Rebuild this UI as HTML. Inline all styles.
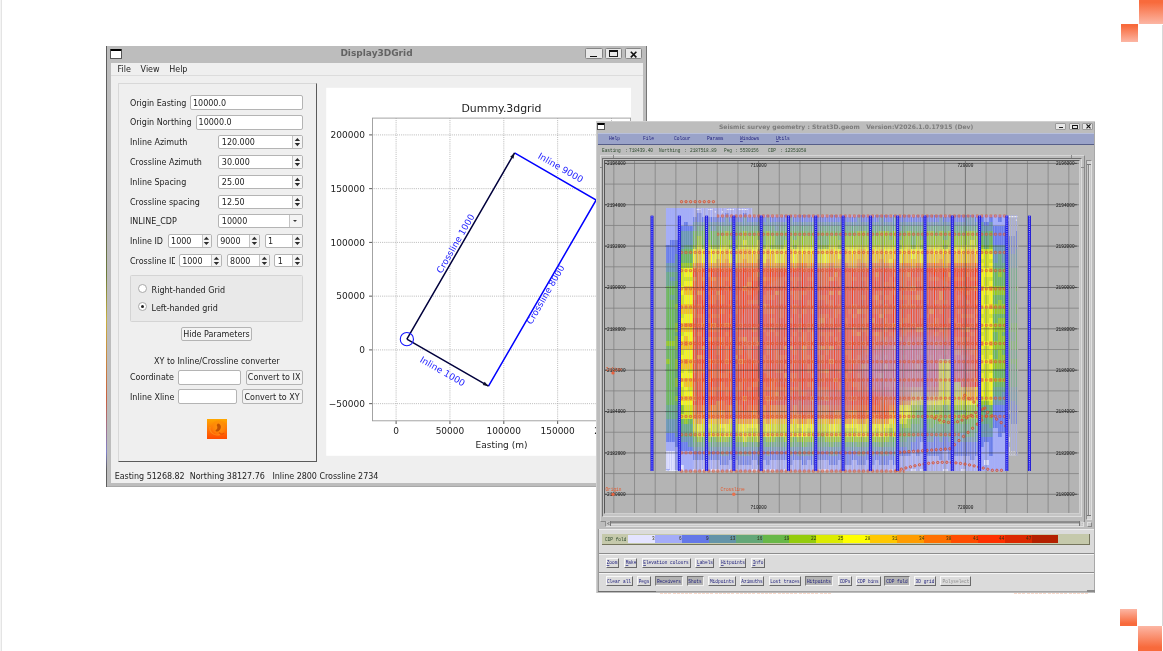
<!DOCTYPE html>
<html lang="en">
<head>
<meta charset="utf-8">
<title>Display3DGrid</title>
<style>
html,body{margin:0;padding:0;background:#fff;}
body{opacity:.999;width:1163px;height:651px;position:relative;overflow:hidden;font-family:"DejaVu Sans","Liberation Sans",sans-serif;}
.abs{position:absolute;}
.lab{position:absolute;font-size:8px;color:#222;white-space:nowrap;line-height:10px;}
.inp{position:absolute;background:#fff;border:1px solid #b4b4b4;border-radius:2px;box-sizing:border-box;font-size:8px;color:#222;line-height:12.5px;padding-left:2.5px;padding-top:.9px;white-space:nowrap;overflow:hidden;}
.spin{position:absolute;right:0;top:0;width:9.3px;height:100%;border-left:1px solid #c4c4c4;box-sizing:border-box;background:#f4f4f4;}
.combo{position:absolute;right:0;top:0;width:12.6px;height:100%;border-left:1px solid #c4c4c4;box-sizing:border-box;background:#f4f4f4;}
.combo:after{content:"";position:absolute;left:3.4px;top:5.2px;border-left:2.3px solid transparent;border-right:2.3px solid transparent;border-top:2.6px solid #333;}
.btn{position:absolute;background:#f3f3f3;border:1px solid #b4b4b4;border-radius:2px;box-sizing:border-box;font-size:8px;color:#222;line-height:12.5px;text-align:center;white-space:nowrap;}
.mn{position:absolute;font-family:"Liberation Mono","DejaVu Sans Mono",monospace;white-space:pre;line-height:7px;}
.ul::first-letter{text-decoration:underline;text-decoration-thickness:.4px;text-underline-offset:.5px;text-decoration-color:rgba(32,32,124,.7)}
</style>
</head>
<body>

<div class="abs" style="left:1px;top:0;width:1px;height:651px;background:#e4e4e4"></div>
<div class="abs" style="left:0px;top:0;width:1px;height:651px;background:#f4f4f4"></div>
<div class="abs" style="left:1162px;top:25px;width:1px;height:601px;background:#d8d8d8"></div>
<div class="abs" style="left:1138.50px;top:0.00px;width:24.50px;height:24.00px;background:linear-gradient(#f86a3c 10%,#fcb6a4 100%)"></div>
<div class="abs" style="left:1121.00px;top:24.00px;width:17.30px;height:18.00px;background:linear-gradient(#f86a3c 10%,#fcb6a4 100%)"></div>
<div class="abs" style="left:1120.00px;top:608.60px;width:17.30px;height:17.60px;background:linear-gradient(#fcb6a4 0%,#f86a3c 85%)"></div>
<div class="abs" style="left:1137.60px;top:626.40px;width:24.60px;height:24.60px;background:linear-gradient(#fcb6a4 0%,#f86a3c 85%)"></div>
<div class="abs" style="left:106.00px;top:46.00px;width:541.00px;height:441.00px;background:#bdbdbd"></div>
<div class="abs" style="left:106.00px;top:46.00px;width:1.00px;height:441.00px;background:linear-gradient(#5e5e5e 0%,#5e5e5e 38%,#6c7a3a 52%,#c8b040 62%,#c86040 80%,#8080c8 92%,#5e5e5e 96%)"></div>
<div class="abs" style="left:646.00px;top:46.00px;width:1.00px;height:441.00px;background:#767676"></div>
<div class="abs" style="left:107.00px;top:486.00px;width:540.00px;height:1.00px;background:#a8a8a8"></div>
<div class="abs" style="left:111.00px;top:62.50px;width:532.00px;height:420.00px;background:#efefef"></div>
<div class="abs" style="left:106px;top:46px;width:541px;height:17px;text-align:center;font-weight:bold;font-size:9.0px;line-height:15.2px;color:#636363;">Display3DGrid</div>
<div class="abs" style="left:110.20px;top:49.20px;width:11.60px;height:9.80px;background:#fff;border:1px solid #555;border-top:2.8px solid #000;box-sizing:border-box;border-radius:1px"></div>
<div class="abs" style="left:584.90px;top:48.40px;width:17.70px;height:11.10px;background:#e9e9e9;border:1px solid #858585;box-sizing:border-box;border-radius:1.5px"><div class="abs" style="left:4.5px;bottom:1.3px;width:7px;height:1.7px;background:#111"></div></div>
<div class="abs" style="left:604.80px;top:48.40px;width:17.60px;height:11.10px;background:#e9e9e9;border:1px solid #858585;box-sizing:border-box;border-radius:1.5px"><div class="abs" style="left:3.4px;top:1px;width:9px;height:6.8px;border:1.1px solid #222;border-top:2px solid #111;box-sizing:border-box"></div></div>
<div class="abs" style="left:624.50px;top:48.40px;width:17.90px;height:11.10px;background:#e9e9e9;border:1px solid #858585;box-sizing:border-box;border-radius:1.5px"><svg class="abs" style="left:4.6px;top:1.3px" width="7.2" height="7.2" viewBox="0 0 7.2 7.2"><path d="M.8 .8L6.4 6.4M6.4 .8L.8 6.4" stroke="#111" stroke-width="1.6" fill="none"/></svg></div>
<div class="abs" style="left:111.00px;top:75.00px;width:532.00px;height:1.00px;background:#dcdcdc"></div>
<div class="lab" style="left:117.50px;top:64.70px;">File</div>
<div class="lab" style="left:140.60px;top:64.70px;">View</div>
<div class="lab" style="left:169.20px;top:64.70px;">Help</div>
<div class="abs" style="left:117.50px;top:82.80px;width:199.00px;height:379.00px;border:1px solid #d8d8d8;border-right:1.3px solid #5a5a5a;border-bottom:1.3px solid #5a5a5a;box-sizing:border-box;background:#efefef"></div>
<div class="lab" style="left:130.00px;top:98.80px;">Origin Easting</div>
<div class="inp" style="left:190.30px;top:95.40px;width:112.30px;height:14.70px;"></div>
<div class="lab" style="left:193.00px;top:98.80px;">10000.0</div>
<div class="lab" style="left:130.00px;top:118.40px;">Origin Northing</div>
<div class="inp" style="left:195.90px;top:114.90px;width:106.70px;height:14.70px;"></div>
<div class="lab" style="left:198.60px;top:118.30px;">10000.0</div>
<div class="lab" style="left:130.00px;top:138.10px;">Inline Azimuth</div>
<div class="inp" style="left:218.30px;top:134.60px;width:84.30px;height:14.00px;"><span class="spin"><svg width="9" height="12.0" viewBox="0 0 9 12.0" style="position:absolute;left:-.4px;top:0"><path d="M1.7 5.00L4.4 1.90L7.1 5.00ZM1.7 7.10L4.4 10.20L7.1 7.10Z" fill="#2c2c2c"/></svg></span></div>
<div class="lab" style="left:221.80px;top:137.65px;">120.000</div>
<div class="lab" style="left:130.00px;top:157.90px;">Crossline Azimuth</div>
<div class="inp" style="left:218.30px;top:154.60px;width:84.30px;height:14.00px;"><span class="spin"><svg width="9" height="12.0" viewBox="0 0 9 12.0" style="position:absolute;left:-.4px;top:0"><path d="M1.7 5.00L4.4 1.90L7.1 5.00ZM1.7 7.10L4.4 10.20L7.1 7.10Z" fill="#2c2c2c"/></svg></span></div>
<div class="lab" style="left:221.80px;top:157.65px;">30.000</div>
<div class="lab" style="left:130.00px;top:177.80px;">Inline Spacing</div>
<div class="inp" style="left:218.30px;top:174.70px;width:84.30px;height:13.90px;"><span class="spin"><svg width="9" height="11.9" viewBox="0 0 9 11.9" style="position:absolute;left:-.4px;top:0"><path d="M1.7 4.95L4.4 1.85L7.1 4.95ZM1.7 7.05L4.4 10.15L7.1 7.05Z" fill="#2c2c2c"/></svg></span></div>
<div class="lab" style="left:221.80px;top:177.70px;">25.00</div>
<div class="lab" style="left:130.00px;top:197.50px;">Crossline spacing</div>
<div class="inp" style="left:218.30px;top:194.60px;width:84.30px;height:14.00px;"><span class="spin"><svg width="9" height="12.0" viewBox="0 0 9 12.0" style="position:absolute;left:-.4px;top:0"><path d="M1.7 5.00L4.4 1.90L7.1 5.00ZM1.7 7.10L4.4 10.20L7.1 7.10Z" fill="#2c2c2c"/></svg></span></div>
<div class="lab" style="left:221.80px;top:197.65px;">12.50</div>
<div class="lab" style="left:130.00px;top:217.20px;">INLINE_CDP</div>
<div class="inp" style="left:218.30px;top:213.70px;width:84.30px;height:14.70px;"><span class="combo"></span></div>
<div class="lab" style="left:221.80px;top:217.10px;">10000</div>
<div class="lab" style="left:130.00px;top:237.00px;">Inline ID</div>
<div class="inp" style="left:167.60px;top:234.00px;width:44.40px;height:13.60px;"><span class="spin"><svg width="9" height="11.6" viewBox="0 0 9 11.6" style="position:absolute;left:-.4px;top:0"><path d="M1.7 4.80L4.4 1.70L7.1 4.80ZM1.7 6.90L4.4 10.00L7.1 6.90Z" fill="#2c2c2c"/></svg></span></div>
<div class="lab" style="left:171.10px;top:236.85px;">1000</div>
<div class="inp" style="left:216.70px;top:234.00px;width:42.90px;height:13.60px;"><span class="spin"><svg width="9" height="11.6" viewBox="0 0 9 11.6" style="position:absolute;left:-.4px;top:0"><path d="M1.7 4.80L4.4 1.70L7.1 4.80ZM1.7 6.90L4.4 10.00L7.1 6.90Z" fill="#2c2c2c"/></svg></span></div>
<div class="lab" style="left:220.20px;top:236.85px;">9000</div>
<div class="inp" style="left:264.50px;top:234.00px;width:38.10px;height:13.60px;"><span class="spin"><svg width="9" height="11.6" viewBox="0 0 9 11.6" style="position:absolute;left:-.4px;top:0"><path d="M1.7 4.80L4.4 1.70L7.1 4.80ZM1.7 6.90L4.4 10.00L7.1 6.90Z" fill="#2c2c2c"/></svg></span></div>
<div class="lab" style="left:268.00px;top:236.85px;">1</div>
<div class="lab" style="left:130px;top:256.90px;width:44.5px;overflow:hidden">Crossline ID</div>
<div class="inp" style="left:178.70px;top:253.90px;width:43.10px;height:13.60px;"><span class="spin"><svg width="9" height="11.6" viewBox="0 0 9 11.6" style="position:absolute;left:-.4px;top:0"><path d="M1.7 4.80L4.4 1.70L7.1 4.80ZM1.7 6.90L4.4 10.00L7.1 6.90Z" fill="#2c2c2c"/></svg></span></div>
<div class="lab" style="left:182.20px;top:256.75px;">1000</div>
<div class="inp" style="left:226.60px;top:253.90px;width:43.00px;height:13.60px;"><span class="spin"><svg width="9" height="11.6" viewBox="0 0 9 11.6" style="position:absolute;left:-.4px;top:0"><path d="M1.7 4.80L4.4 1.70L7.1 4.80ZM1.7 6.90L4.4 10.00L7.1 6.90Z" fill="#2c2c2c"/></svg></span></div>
<div class="lab" style="left:230.10px;top:256.75px;">8000</div>
<div class="inp" style="left:274.30px;top:253.90px;width:28.30px;height:13.60px;"><span class="spin"><svg width="9" height="11.6" viewBox="0 0 9 11.6" style="position:absolute;left:-.4px;top:0"><path d="M1.7 4.80L4.4 1.70L7.1 4.80ZM1.7 6.90L4.4 10.00L7.1 6.90Z" fill="#2c2c2c"/></svg></span></div>
<div class="lab" style="left:277.80px;top:256.75px;">1</div>
<div class="abs" style="left:130.40px;top:275.40px;width:172.20px;height:46.60px;background:#e9e9e9;border:1px solid #d4d4d4;box-sizing:border-box;border-radius:1.5px"></div>
<div class="abs" style="left:138.00px;top:284.40px;width:9.00px;height:9.00px;border-radius:50%;background:#fff;border:1px solid #a8a8a8;box-sizing:border-box"></div>
<div class="lab" style="left:151.60px;top:285.50px;">Right-handed Grid</div>
<div class="abs" style="left:138.00px;top:302.40px;width:9.00px;height:9.00px;border-radius:50%;background:#fff;border:1px solid #a8a8a8;box-sizing:border-box"><div class="abs" style="left:2px;top:2px;width:3px;height:3px;border-radius:50%;background:#222"></div></div>
<div class="lab" style="left:151.60px;top:303.60px;">Left-handed grid</div>
<div class="btn" style="left:180.60px;top:326.80px;width:71.80px;height:14.50px;"></div>
<div class="lab" style="left:180.60px;width:71.80px;text-align:center;top:329.90px;">Hide Parameters</div>
<div class="lab" style="left:154.00px;top:356.80px;">XY to Inline/Crossline converter</div>
<div class="lab" style="left:130.00px;top:373.20px;">Coordinate</div>
<div class="inp" style="left:178.30px;top:369.70px;width:62.30px;height:14.90px;"></div>
<div class="btn" style="left:245.60px;top:369.70px;width:57.00px;height:14.90px;"></div>
<div class="lab" style="left:245.60px;width:57.00px;text-align:center;top:373.20px;">Convert to IX</div>
<div class="lab" style="left:130.00px;top:392.60px;">Inline Xline</div>
<div class="inp" style="left:178.30px;top:389.40px;width:59.10px;height:14.30px;"></div>
<div class="btn" style="left:241.60px;top:389.40px;width:61.00px;height:14.30px;"></div>
<div class="lab" style="left:241.60px;width:61.00px;text-align:center;top:392.60px;">Convert to XY</div>
<svg class="abs" style="left:206.6px;top:418.9px" width="20" height="20" viewBox="0 0 20 20"><defs><linearGradient id="og" x1="0" y1="0" x2="0" y2="1"><stop offset="0" stop-color="#ffa800"/><stop offset=".45" stop-color="#ff7c08"/><stop offset="1" stop-color="#ff4a00"/></linearGradient><radialGradient id="og2" cx=".6" cy=".45" r=".42"><stop offset="0" stop-color="#ff9a10" stop-opacity=".9"/><stop offset=".7" stop-color="#ff8a08" stop-opacity=".5"/><stop offset="1" stop-color="#ff7000" stop-opacity="0"/></radialGradient></defs><rect width="20" height="20" fill="url(#og)"/><rect width="20" height="20" fill="url(#og2)"/><path d="M11.2 4.6C14.6 5.2 15 10.4 11.4 12.2C10 12.9 8.4 12.4 8.6 11.2C10.6 10.6 10.8 8.2 9.8 6.6C10 5.4 10.4 4.8 11.2 4.6Z" fill="#b84800" fill-opacity=".85"/><path d="M3 8C2 13 7 17.5 13 15.5" stroke="#ff9c20" stroke-width="1.1" fill="none" stroke-opacity=".6"/><path d="M12 13.5C13.5 15.5 16 15.6 17 14" stroke="#d84000" stroke-width="1.3" fill="none" stroke-opacity=".55"/></svg>
<div class="lab" style="left:114.70px;top:471.90px;letter-spacing:-.022px">Easting 51268.82&nbsp; Northing 38127.76&nbsp;&nbsp; Inline 2800 Crossline 2734</div>
<svg class="abs" style="left:326.0px;top:87.0px" width="305.0" height="369.5" viewBox="0 0 305.0 369.5" font-family="DejaVu Sans,Liberation Sans,sans-serif">
<rect x="0.2" y="0.8" width="304.8" height="368.0" fill="#fff"/>
<path d="M70.10 31.10V333.80M123.95 31.10V333.80M177.80 31.10V333.80M231.65 31.10V333.80M285.50 31.10V333.80M46.50 316.65H304.60M46.50 262.90H304.60M46.50 209.15H304.60M46.50 155.40H304.60M46.50 101.65H304.60M46.50 47.90H304.60" stroke="#9c9c9c" stroke-width="0.8" stroke-dasharray="0.8 1.1" fill="none"/>
<path d="M70.10 333.80v3.2M123.95 333.80v3.2M177.80 333.80v3.2M231.65 333.80v3.2M285.50 333.80v3.2M46.50 316.65h-3.4M46.50 262.90h-3.4M46.50 209.15h-3.4M46.50 155.40h-3.4M46.50 101.65h-3.4M46.50 47.90h-3.4" stroke="#222" stroke-width="0.75" fill="none"/>
<rect x="46.50" y="31.10" width="258.10" height="302.70" fill="none" stroke="#9a9a9a" stroke-width="0.9"/>
<text x="38.90" y="319.95" font-size="9" fill="#222" text-anchor="end">−50000</text>
<text x="38.90" y="266.20" font-size="9" fill="#222" text-anchor="end">0</text>
<text x="38.90" y="212.45" font-size="9" fill="#222" text-anchor="end">50000</text>
<text x="38.90" y="158.70" font-size="9" fill="#222" text-anchor="end">100000</text>
<text x="38.90" y="104.95" font-size="9" fill="#222" text-anchor="end">150000</text>
<text x="38.90" y="51.20" font-size="9" fill="#222" text-anchor="end">200000</text>
<text x="70.10" y="346.80" font-size="9" fill="#222" text-anchor="middle">0</text>
<text x="123.95" y="346.80" font-size="9" fill="#222" text-anchor="middle">50000</text>
<text x="177.80" y="346.80" font-size="9" fill="#222" text-anchor="middle">100000</text>
<text x="231.65" y="346.80" font-size="9" fill="#222" text-anchor="middle">150000</text>
<text x="285.50" y="346.80" font-size="9" fill="#222" text-anchor="middle">200000</text>
<text x="175.50" y="360.90" font-size="9" fill="#222" text-anchor="middle">Easting (m)</text>
<text x="175.50" y="25.20" font-size="10.9" fill="#222" text-anchor="middle">Dummy.3dgrid</text>
<path d="M162.48 299.18L270.18 112.99L188.57 65.95" stroke="#0000ff" stroke-width="1.5" fill="none" stroke-linejoin="miter"/>
<path d="M80.87 252.15L162.48 299.18M80.87 252.15L188.57 65.95" stroke="#00003c" stroke-width="1.5" fill="none"/>
<path d="M162.48 299.18L156.77 298.08L158.67 294.79Z" fill="#10102c"/>
<path d="M188.57 65.95L187.46 71.67L184.17 69.76Z" fill="#10102c"/>
<circle cx="80.87" cy="252.15" r="6.6" fill="none" stroke="#1414ff" stroke-width="1.1"/>
<text transform="translate(234.70 80.60) rotate(30)" font-size="9" fill="#1a1aff" text-anchor="middle" y="3.2">Inline 9000</text>
<text transform="translate(116.60 284.20) rotate(30)" font-size="9" fill="#1a1aff" text-anchor="middle" y="3.2">Inline 1000</text>
<text transform="translate(129.50 156.50) rotate(-60)" font-size="9" fill="#1a1aff" text-anchor="middle" y="3.2">Crossline 1000</text>
<text transform="translate(219.50 207.50) rotate(-60)" font-size="9" fill="#1a1aff" text-anchor="middle" y="3.2">Crossline 8000</text>
</svg>
<div class="abs" style="left:596.30px;top:120.80px;width:498.30px;height:472.20px;background:#bdbdbd"></div>
<div class="abs" style="left:596.30px;top:120.80px;width:1.00px;height:472.20px;background:#cfcfcf"></div>
<div class="abs" style="left:1093.80px;top:120.80px;width:0.90px;height:472.20px;background:#a8a8a8"></div>
<div class="abs" style="left:596.30px;top:120.80px;width:498.30px;height:0.80px;background:#cfcfcf"></div>
<div class="abs" style="left:718.9px;top:120.7px;width:255px;height:11px;font-weight:bold;font-size:6.05px;line-height:11px;color:#7c7c7c;white-space:pre;letter-spacing:.02px">Seismic survey geometry : Strat3D.geom   Version:V2026.1.0.17915 (Dev)</div>
<div class="abs" style="left:597.40px;top:123.20px;width:7.70px;height:6.60px;background:#fff;border:.8px solid #555;border-top:2px solid #000;box-sizing:border-box;border-radius:.6px"></div>
<div class="abs" style="left:1054.70px;top:122.60px;width:11.70px;height:7.90px;background:#e6e6e6;border:.7px solid #9a9a9a;box-sizing:border-box;border-radius:1px"><div class="abs" style="left:3.4px;bottom:1.3px;width:4.2px;height:1.1px;background:#222"></div></div>
<div class="abs" style="left:1068.70px;top:122.60px;width:11.50px;height:7.90px;background:#e6e6e6;border:.7px solid #9a9a9a;box-sizing:border-box;border-radius:1px"><div class="abs" style="left:2.6px;top:1px;width:5.6px;height:4.3px;border:.8px solid #222;border-top:1.3px solid #111;box-sizing:border-box"></div></div>
<div class="abs" style="left:1082.20px;top:122.60px;width:11.30px;height:7.90px;background:#e6e6e6;border:.7px solid #9a9a9a;box-sizing:border-box;border-radius:1px"><svg class="abs" style="left:2.9px;top:.9px" width="5" height="4.6" viewBox="0 0 5 4.6"><path d="M.5 .3L4.5 4.3M4.5 .3L.5 4.3" stroke="#111" stroke-width="1.1" fill="none"/></svg></div>
<div class="abs" style="left:598.40px;top:132.80px;width:495.50px;height:12.40px;background:#9aa3c9;border-top:.8px solid #b8c0dc;border-bottom:1px solid #565e88;box-sizing:border-box"></div>
<div class="mn" style="left:609.30px;top:134.75px;font-size:5.98px;color:#20207c;transform:scaleX(.77);transform-origin:0 0;">Help</div>
<div class="mn" style="left:642.90px;top:134.75px;font-size:5.98px;color:#20207c;transform:scaleX(.77);transform-origin:0 0;">File</div>
<div class="mn" style="left:674.00px;top:134.75px;font-size:5.98px;color:#20207c;transform:scaleX(.77);transform-origin:0 0;">Colour</div>
<div class="mn" style="left:707.30px;top:134.75px;font-size:5.98px;color:#20207c;transform:scaleX(.77);transform-origin:0 0;">Params</div>
<div class="mn ul" style="left:739.90px;top:134.75px;font-size:5.98px;color:#20207c;transform:scaleX(.77);transform-origin:0 0;">Windows</div>
<div class="mn ul" style="left:775.80px;top:134.75px;font-size:5.98px;color:#20207c;transform:scaleX(.77);transform-origin:0 0;">Utils</div>
<div class="mn" style="left:601.60px;top:146.55px;font-size:5.79px;color:#2c482c;transform:scaleX(.77);transform-origin:0 0;">Easting</div>
<div class="mn" style="left:624.60px;top:146.55px;font-size:5.79px;color:#2c482c;transform:scaleX(.77);transform-origin:0 0;">:</div>
<div class="mn" style="left:629.10px;top:146.55px;font-size:5.79px;color:#2c482c;transform:scaleX(.77);transform-origin:0 0;">718439.40</div>
<div class="mn" style="left:658.90px;top:146.55px;font-size:5.79px;color:#2c482c;transform:scaleX(.77);transform-origin:0 0;">Northing</div>
<div class="mn" style="left:684.40px;top:146.55px;font-size:5.79px;color:#2c482c;transform:scaleX(.77);transform-origin:0 0;">:</div>
<div class="mn" style="left:689.50px;top:146.55px;font-size:5.79px;color:#2c482c;transform:scaleX(.77);transform-origin:0 0;">2187518.89</div>
<div class="mn" style="left:724.10px;top:146.55px;font-size:5.79px;color:#2c482c;transform:scaleX(.77);transform-origin:0 0;">Peg</div>
<div class="mn" style="left:734.80px;top:146.55px;font-size:5.79px;color:#2c482c;transform:scaleX(.77);transform-origin:0 0;">:</div>
<div class="mn" style="left:740.20px;top:146.55px;font-size:5.79px;color:#2c482c;transform:scaleX(.77);transform-origin:0 0;">5530156</div>
<div class="mn" style="left:768.20px;top:146.55px;font-size:5.79px;color:#2c482c;transform:scaleX(.77);transform-origin:0 0;">CDP</div>
<div class="mn" style="left:779.50px;top:146.55px;font-size:5.79px;color:#2c482c;transform:scaleX(.77);transform-origin:0 0;">:</div>
<div class="mn" style="left:784.50px;top:146.55px;font-size:5.79px;color:#2c482c;transform:scaleX(.77);transform-origin:0 0;">12351058</div>
<div class="abs" style="left:599.60px;top:155.00px;width:485.00px;height:367.00px;background:#bdbdbd;border:.9px solid #d6d6d6;border-right-color:#8a8a8a;border-bottom-color:#8a8a8a;box-sizing:border-box"></div>
<div class="abs" style="left:602.00px;top:157.60px;width:480.20px;height:359.60px;background:#c4c4c4;border:1px solid #6e6e6e;border-right-color:#dcdcdc;border-bottom-color:#dcdcdc;box-sizing:border-box"></div>
<div class="abs" style="left:604.30px;top:159.80px;width:475.60px;height:353.80px;background:#b4b4b4;border:.9px solid #585858;border-right-color:#d0d0d0;border-bottom-color:#d0d0d0;box-sizing:border-box"></div>
<div class="abs" style="left:612.70px;top:155.00px;width:0.80px;height:3.00px;background:#8a8a8a"></div>
<div class="abs" style="left:600.00px;top:166.60px;width:2.40px;height:0.80px;background:#8a8a8a"></div>
<div class="abs" style="left:1071.00px;top:155.00px;width:0.80px;height:3.00px;background:#8a8a8a"></div>
<div class="abs" style="left:1080.50px;top:166.60px;width:3.00px;height:0.80px;background:#8a8a8a"></div>
<div class="abs" style="left:1085.70px;top:159.80px;width:6.30px;height:360.00px;background:#c8c8c8;border:.8px solid #8e8e8e;border-right-color:#e0e0e0;border-bottom-color:#e0e0e0;box-sizing:border-box"></div>
<div class="abs" style="left:1087.60px;top:164.50px;width:2.40px;height:351.00px;background:#b6b6b6;border-left:.8px solid #8a8a8a;border-right:.8px solid #dcdcdc;box-sizing:border-box"></div>
<div class="abs" style="left:1086.60px;top:160.60px;width:4.50px;height:4.00px;background:#d4d4d4;border-bottom:.8px solid #777;box-sizing:border-box"></div>
<div class="abs" style="left:1086.60px;top:515.30px;width:4.50px;height:4.00px;background:#d4d4d4;border-top:.8px solid #777;box-sizing:border-box"></div>
<div class="abs" style="left:605.00px;top:520.60px;width:479.00px;height:6.00px;background:#c8c8c8;border:.8px solid #8e8e8e;border-right-color:#e0e0e0;border-bottom-color:#e0e0e0;box-sizing:border-box"></div>
<div class="abs" style="left:611.00px;top:522.40px;width:468.00px;height:2.40px;background:#b6b6b6;border-top:.8px solid #8a8a8a;border-bottom:.8px solid #dcdcdc;box-sizing:border-box"></div>
<div class="abs" style="left:606.00px;top:521.40px;width:4.50px;height:4.40px;background:#c6c6c6;border-right:.8px solid #777;box-sizing:border-box"><svg class="abs" style="left:.6px;top:.7px" width="3" height="3" viewBox="0 0 3 3"><path d="M2.6 .2L.4 1.5L2.6 2.8" stroke="#555" stroke-width=".6" fill="none"/></svg></div>
<div class="abs" style="left:1079.00px;top:521.40px;width:4.20px;height:4.40px;background:#c6c6c6;border-left:.8px solid #777;box-sizing:border-box"><svg class="abs" style="left:.8px;top:.7px" width="3" height="3" viewBox="0 0 3 3"><path d="M.4 .2L2.6 1.5L.4 2.8Z" stroke="#eee" stroke-width=".5" fill="#aaa"/></svg></div>
<div class="abs" style="left:1086.60px;top:521.60px;width:5.00px;height:5.00px;background:#c8c8c8;border:.8px solid #e0e0e0;border-right-color:#888;border-bottom-color:#888;box-sizing:border-box"></div>
<svg class="abs" style="left:605.2px;top:160.7px" width="473.8" height="352.0" viewBox="605.2 160.7 473.8 352.0">
<defs>
<pattern id="st" patternUnits="userSpaceOnUse" x="665.75" y="0" width="4.55" height="8"><rect x="1.75" y="0" width="1.8" height="8" fill="#b0a09c" fill-opacity=".34"/><rect x="1.1" y="0" width=".78" height="8" fill="#c8c8f0" fill-opacity=".95"/><rect x="3.45" y="0" width=".78" height="8" fill="#c8c8f0" fill-opacity=".95"/></pattern>
<pattern id="st2" patternUnits="userSpaceOnUse" x="665.75" y="0" width="4.55" height="8"><rect x="1.2" y="0" width=".7" height="8" fill="#a8b4f4" fill-opacity=".7"/><rect x="3.5" y="0" width=".7" height="8" fill="#a8b4f4" fill-opacity=".7"/></pattern>
<pattern id="sh" patternUnits="userSpaceOnUse" x="679.4" y="206.59" width="4.55" height="18.22"><circle cx="2.27" cy="9.11" r="1.15" fill="#f0a070" fill-opacity=".4" stroke="#d84424" stroke-width=".8"/></pattern>
<clipPath id="hc"><path d="M665.7 207.8H752.4V214.6H1018.3V455H1007.2V470.9H665.7Z"/></clipPath>
<filter id="bl" x="-5%" y="-5%" width="110%" height="110%"><feGaussianBlur stdDeviation="0.01 0.7"/></filter>
<filter id="bl2" x="-30%" y="-30%" width="160%" height="160%"><feGaussianBlur stdDeviation="7"/></filter>
</defs>
<rect x="605.2" y="160.7" width="473.8" height="352.0" fill="#b4b4b4"/>
<path d="M614.04 160.7v352.0M634.72 160.7v352.0M655.40 160.7v352.0M676.08 160.7v352.0M696.76 160.7v352.0M717.44 160.7v352.0M738.12 160.7v352.0M779.48 160.7v352.0M800.16 160.7v352.0M820.84 160.7v352.0M841.52 160.7v352.0M862.20 160.7v352.0M882.88 160.7v352.0M903.56 160.7v352.0M924.24 160.7v352.0M944.92 160.7v352.0M986.28 160.7v352.0M1006.96 160.7v352.0M1027.64 160.7v352.0M1048.32 160.7v352.0M1069.00 160.7v352.0M605.2 183.78h473.8M605.2 225.14h473.8M605.2 266.50h473.8M605.2 307.86h473.8M605.2 349.22h473.8M605.2 390.58h473.8M605.2 431.94h473.8M605.2 473.30h473.8" stroke="#828282" stroke-width=".8" fill="none"/>
<path d="M758.80 160.7v352.0M965.60 160.7v352.0M605.2 163.10h473.8M605.2 204.46h473.8M605.2 245.82h473.8M605.2 287.18h473.8M605.2 328.54h473.8M605.2 369.90h473.8M605.2 411.26h473.8M605.2 452.62h473.8M605.2 493.98h473.8" stroke="#6a6a6a" stroke-width=".85" fill="none"/>
<g clip-path="url(#hc)"><g filter="url(#bl)" shape-rendering="crispEdges">
<path d="M665.75 450.80h4.60v18.39h-4.60zM670.30 450.80h4.60v22.97h-4.60zM679.40 464.56h4.60v9.22h-4.60zM693.05 469.14h4.60v4.63h-4.60zM702.15 469.14h4.60v4.63h-4.60zM711.25 469.14h4.60v4.63h-4.60zM715.80 469.14h4.60v4.63h-4.60zM729.45 469.14h4.60v4.63h-4.60zM734.00 469.14h4.60v4.63h-4.60zM752.20 469.14h4.60v4.63h-4.60zM761.30 469.14h4.60v4.63h-4.60zM770.40 469.14h4.60v4.63h-4.60zM784.05 469.14h4.60v4.63h-4.60zM815.90 469.14h4.60v4.63h-4.60zM820.45 469.14h4.60v4.63h-4.60zM825.00 469.14h4.60v4.63h-4.60zM888.70 469.14h4.60v4.63h-4.60zM897.80 469.14h4.60v4.63h-4.60zM911.45 469.14h4.60v4.63h-4.60zM920.55 469.14h4.60v4.63h-4.60zM943.30 469.14h4.60v4.63h-4.60zM961.50 469.14h4.60v4.63h-4.60zM984.25 459.97h4.60v4.63h-4.60zM1007.00 437.05h4.60v4.63h-4.60zM1007.00 446.22h4.60v13.80h-4.60zM1011.55 450.80h4.60v4.63h-4.60z" fill="#e4e4ff"/>
<path d="M665.75 207.80h4.60v36.73h-4.60zM665.75 441.63h4.60v9.22h-4.60zM665.75 469.14h4.60v4.63h-4.60zM670.30 207.80h4.60v32.15h-4.60zM670.30 441.63h4.60v9.22h-4.60zM674.85 207.80h4.60v32.15h-4.60zM674.85 446.22h4.60v27.56h-4.60zM679.40 207.80h4.60v18.39h-4.60zM679.40 450.80h4.60v13.80h-4.60zM683.95 207.80h4.60v13.81h-4.60zM683.95 450.80h4.60v22.97h-4.60zM688.50 207.80h4.60v18.39h-4.60zM688.50 450.80h4.60v22.97h-4.60zM693.05 207.80h4.60v9.22h-4.60zM693.05 459.97h4.60v9.22h-4.60zM697.60 207.80h4.60v4.64h-4.60zM697.60 459.97h4.60v13.80h-4.60zM702.15 207.80h4.60v9.22h-4.60zM702.15 459.97h4.60v9.22h-4.60zM706.70 207.80h4.60v9.22h-4.60zM706.70 459.97h4.60v13.80h-4.60zM711.25 207.80h4.60v9.22h-4.60zM711.25 459.97h4.60v9.22h-4.60zM715.80 207.80h4.60v9.22h-4.60zM715.80 459.97h4.60v9.22h-4.60zM720.35 207.80h4.60v9.22h-4.60zM720.35 464.56h4.60v9.22h-4.60zM724.90 207.80h4.60v4.64h-4.60zM724.90 464.56h4.60v9.22h-4.60zM729.45 207.80h4.60v9.22h-4.60zM729.45 459.97h4.60v9.22h-4.60zM734.00 207.80h4.60v9.22h-4.60zM734.00 459.97h4.60v9.22h-4.60zM738.55 207.80h4.60v9.22h-4.60zM738.55 464.56h4.60v9.22h-4.60zM743.10 207.80h4.60v4.64h-4.60zM743.10 464.56h4.60v9.22h-4.60zM747.65 207.80h4.60v9.22h-4.60zM747.65 464.56h4.60v9.22h-4.60zM752.20 207.80h4.60v9.22h-4.60zM752.20 459.97h4.60v9.22h-4.60zM756.75 207.80h4.60v4.64h-4.60zM756.75 464.56h4.60v9.22h-4.60zM761.30 207.80h4.60v9.22h-4.60zM761.30 459.97h4.60v9.22h-4.60zM765.85 207.80h4.60v4.64h-4.60zM765.85 464.56h4.60v9.22h-4.60zM770.40 207.80h4.60v9.22h-4.60zM770.40 459.97h4.60v9.22h-4.60zM774.95 207.80h4.60v9.22h-4.60zM774.95 459.97h4.60v13.80h-4.60zM779.50 207.80h4.60v9.22h-4.60zM779.50 459.97h4.60v13.80h-4.60zM784.05 207.80h4.60v4.64h-4.60zM784.05 459.97h4.60v9.22h-4.60zM788.60 207.80h4.60v4.64h-4.60zM788.60 464.56h4.60v9.22h-4.60zM793.15 207.80h4.60v9.22h-4.60zM793.15 459.97h4.60v13.80h-4.60zM797.70 207.80h4.60v4.64h-4.60zM797.70 459.97h4.60v13.80h-4.60zM802.25 207.80h4.60v4.64h-4.60zM802.25 464.56h4.60v9.22h-4.60zM806.80 207.80h4.60v4.64h-4.60zM806.80 459.97h4.60v13.80h-4.60zM811.35 207.80h4.60v9.22h-4.60zM811.35 464.56h4.60v9.22h-4.60zM815.90 207.80h4.60v9.22h-4.60zM815.90 459.97h4.60v9.22h-4.60zM820.45 207.80h4.60v9.22h-4.60zM820.45 459.97h4.60v9.22h-4.60zM825.00 207.80h4.60v9.22h-4.60zM825.00 459.97h4.60v9.22h-4.60zM829.55 207.80h4.60v4.64h-4.60zM829.55 464.56h4.60v9.22h-4.60zM834.10 207.80h4.60v4.64h-4.60zM834.10 464.56h4.60v9.22h-4.60zM838.65 207.80h4.60v9.22h-4.60zM838.65 459.97h4.60v13.80h-4.60zM843.20 207.80h4.60v9.22h-4.60zM843.20 464.56h4.60v9.22h-4.60zM847.75 207.80h4.60v9.22h-4.60zM847.75 464.56h4.60v9.22h-4.60zM852.30 207.80h4.60v9.22h-4.60zM852.30 459.97h4.60v13.80h-4.60zM856.85 207.80h4.60v4.64h-4.60zM856.85 464.56h4.60v9.22h-4.60zM861.40 207.80h4.60v4.64h-4.60zM861.40 464.56h4.60v9.22h-4.60zM865.95 207.80h4.60v9.22h-4.60zM865.95 459.97h4.60v13.80h-4.60zM870.50 207.80h4.60v9.22h-4.60zM870.50 464.56h4.60v9.22h-4.60zM875.05 207.80h4.60v4.64h-4.60zM875.05 459.97h4.60v13.80h-4.60zM879.60 207.80h4.60v4.64h-4.60zM879.60 464.56h4.60v9.22h-4.60zM884.15 207.80h4.60v4.64h-4.60zM884.15 464.56h4.60v9.22h-4.60zM888.70 207.80h4.60v9.22h-4.60zM888.70 459.97h4.60v9.22h-4.60zM893.25 207.80h4.60v4.64h-4.60zM893.25 464.56h4.60v9.22h-4.60zM897.80 207.80h4.60v9.22h-4.60zM897.80 455.39h4.60v13.80h-4.60zM902.35 207.80h4.60v4.64h-4.60zM902.35 455.39h4.60v18.39h-4.60zM906.90 207.80h4.60v4.64h-4.60zM906.90 455.39h4.60v18.39h-4.60zM911.45 207.80h4.60v9.22h-4.60zM911.45 450.80h4.60v18.39h-4.60zM916.00 207.80h4.60v4.64h-4.60zM916.00 455.39h4.60v18.39h-4.60zM920.55 207.80h4.60v9.22h-4.60zM920.55 441.63h4.60v27.56h-4.60zM925.10 207.80h4.60v4.64h-4.60zM925.10 455.39h4.60v18.39h-4.60zM929.65 207.80h4.60v4.64h-4.60zM929.65 455.39h4.60v18.39h-4.60zM934.20 207.80h4.60v4.64h-4.60zM934.20 455.39h4.60v18.39h-4.60zM938.75 207.80h4.60v4.64h-4.60zM938.75 459.97h4.60v13.80h-4.60zM943.30 207.80h4.60v9.22h-4.60zM943.30 450.80h4.60v18.39h-4.60zM947.85 207.80h4.60v4.64h-4.60zM947.85 459.97h4.60v13.80h-4.60zM952.40 207.80h4.60v4.64h-4.60zM952.40 455.39h4.60v18.39h-4.60zM956.95 207.80h4.60v4.64h-4.60zM956.95 455.39h4.60v18.39h-4.60zM961.50 207.80h4.60v4.64h-4.60zM961.50 455.39h4.60v13.80h-4.60zM966.05 207.80h4.60v4.64h-4.60zM966.05 455.39h4.60v18.39h-4.60zM970.60 207.80h4.60v4.64h-4.60zM970.60 459.97h4.60v13.80h-4.60zM975.15 207.80h4.60v9.22h-4.60zM975.15 455.39h4.60v18.39h-4.60zM979.70 207.80h4.60v9.22h-4.60zM979.70 446.22h4.60v27.56h-4.60zM984.25 207.80h4.60v13.81h-4.60zM984.25 441.63h4.60v18.39h-4.60zM984.25 464.56h4.60v9.22h-4.60zM988.80 207.80h4.60v9.22h-4.60zM988.80 455.39h4.60v18.39h-4.60zM993.35 207.80h4.60v18.39h-4.60zM993.35 427.88h4.60v45.90h-4.60zM997.90 207.80h4.60v9.22h-4.60zM997.90 221.56h4.60v4.64h-4.60zM997.90 437.05h4.60v36.73h-4.60zM1002.45 207.80h4.60v18.39h-4.60zM1002.45 432.46h4.60v41.31h-4.60zM1007.00 207.80h4.60v27.56h-4.60zM1007.00 409.54h4.60v4.63h-4.60zM1007.00 418.71h4.60v18.39h-4.60zM1007.00 441.63h4.60v4.63h-4.60zM1007.00 459.97h4.60v13.80h-4.60zM1011.55 207.80h4.60v27.56h-4.60zM1011.55 423.29h4.60v27.56h-4.60zM1011.55 455.39h4.60v18.39h-4.60zM1016.10 207.80h4.60v22.98h-4.60zM1016.10 423.29h4.60v50.48h-4.60z" fill="#a4acf8"/>
<path d="M665.75 244.48h4.60v18.39h-4.60zM665.75 432.46h4.60v9.22h-4.60zM670.30 239.90h4.60v22.97h-4.60zM670.30 432.46h4.60v9.22h-4.60zM674.85 239.90h4.60v13.81h-4.60zM674.85 437.05h4.60v9.22h-4.60zM679.40 226.14h4.60v4.64h-4.60zM679.40 441.63h4.60v9.22h-4.60zM683.95 221.56h4.60v9.22h-4.60zM683.95 441.63h4.60v9.22h-4.60zM688.50 226.14h4.60v4.64h-4.60zM688.50 446.22h4.60v4.63h-4.60zM693.05 216.97h4.60v4.64h-4.60zM693.05 450.80h4.60v9.22h-4.60zM697.60 212.39h4.60v9.22h-4.60zM697.60 450.80h4.60v9.22h-4.60zM702.15 216.97h4.60v4.64h-4.60zM702.15 450.80h4.60v9.22h-4.60zM706.70 216.97h4.60v4.64h-4.60zM706.70 455.39h4.60v4.63h-4.60zM711.25 216.97h4.60v4.64h-4.60zM711.25 450.80h4.60v9.22h-4.60zM715.80 216.97h4.60v4.64h-4.60zM715.80 450.80h4.60v9.22h-4.60zM720.35 216.97h4.60v4.64h-4.60zM720.35 455.39h4.60v9.22h-4.60zM724.90 212.39h4.60v4.64h-4.60zM724.90 455.39h4.60v9.22h-4.60zM729.45 216.97h4.60v4.64h-4.60zM729.45 450.80h4.60v9.22h-4.60zM734.00 216.97h4.60v4.64h-4.60zM734.00 450.80h4.60v9.22h-4.60zM738.55 216.97h4.60v4.64h-4.60zM738.55 455.39h4.60v9.22h-4.60zM743.10 212.39h4.60v4.64h-4.60zM743.10 455.39h4.60v9.22h-4.60zM747.65 216.97h4.60v4.64h-4.60zM747.65 455.39h4.60v9.22h-4.60zM752.20 216.97h4.60v4.64h-4.60zM752.20 450.80h4.60v9.22h-4.60zM756.75 212.39h4.60v9.22h-4.60zM756.75 455.39h4.60v9.22h-4.60zM761.30 216.97h4.60v4.64h-4.60zM761.30 450.80h4.60v9.22h-4.60zM765.85 212.39h4.60v4.64h-4.60zM765.85 455.39h4.60v9.22h-4.60zM770.40 216.97h4.60v4.64h-4.60zM770.40 450.80h4.60v9.22h-4.60zM774.95 216.97h4.60v4.64h-4.60zM774.95 450.80h4.60v9.22h-4.60zM779.50 216.97h4.60v4.64h-4.60zM779.50 450.80h4.60v9.22h-4.60zM784.05 212.39h4.60v9.22h-4.60zM784.05 450.80h4.60v9.22h-4.60zM788.60 212.39h4.60v4.64h-4.60zM788.60 455.39h4.60v9.22h-4.60zM793.15 216.97h4.60v4.64h-4.60zM793.15 450.80h4.60v9.22h-4.60zM797.70 212.39h4.60v9.22h-4.60zM797.70 455.39h4.60v4.63h-4.60zM802.25 212.39h4.60v9.22h-4.60zM802.25 455.39h4.60v9.22h-4.60zM806.80 212.39h4.60v9.22h-4.60zM806.80 455.39h4.60v4.63h-4.60zM811.35 216.97h4.60v4.64h-4.60zM811.35 455.39h4.60v9.22h-4.60zM815.90 216.97h4.60v4.64h-4.60zM815.90 450.80h4.60v9.22h-4.60zM820.45 216.97h4.60v4.64h-4.60zM820.45 450.80h4.60v9.22h-4.60zM825.00 216.97h4.60v4.64h-4.60zM825.00 450.80h4.60v9.22h-4.60zM829.55 212.39h4.60v9.22h-4.60zM829.55 455.39h4.60v9.22h-4.60zM834.10 212.39h4.60v9.22h-4.60zM834.10 455.39h4.60v9.22h-4.60zM838.65 216.97h4.60v4.64h-4.60zM838.65 450.80h4.60v9.22h-4.60zM843.20 216.97h4.60v4.64h-4.60zM843.20 450.80h4.60v13.80h-4.60zM847.75 216.97h4.60v4.64h-4.60zM847.75 450.80h4.60v13.80h-4.60zM852.30 216.97h4.60v4.64h-4.60zM852.30 450.80h4.60v9.22h-4.60zM856.85 212.39h4.60v4.64h-4.60zM856.85 455.39h4.60v9.22h-4.60zM861.40 212.39h4.60v9.22h-4.60zM861.40 455.39h4.60v9.22h-4.60zM865.95 216.97h4.60v4.64h-4.60zM865.95 450.80h4.60v9.22h-4.60zM870.50 216.97h4.60v4.64h-4.60zM870.50 455.39h4.60v9.22h-4.60zM875.05 212.39h4.60v9.22h-4.60zM875.05 450.80h4.60v9.22h-4.60zM879.60 212.39h4.60v4.64h-4.60zM879.60 455.39h4.60v9.22h-4.60zM884.15 212.39h4.60v9.22h-4.60zM884.15 455.39h4.60v9.22h-4.60zM888.70 216.97h4.60v4.64h-4.60zM888.70 450.80h4.60v9.22h-4.60zM893.25 212.39h4.60v4.64h-4.60zM893.25 455.39h4.60v9.22h-4.60zM897.80 216.97h4.60v4.64h-4.60zM897.80 446.22h4.60v9.22h-4.60zM902.35 212.39h4.60v9.22h-4.60zM902.35 446.22h4.60v9.22h-4.60zM906.90 212.39h4.60v9.22h-4.60zM906.90 450.80h4.60v4.63h-4.60zM911.45 216.97h4.60v4.64h-4.60zM911.45 441.63h4.60v9.22h-4.60zM916.00 212.39h4.60v9.22h-4.60zM916.00 437.05h4.60v18.39h-4.60zM920.55 216.97h4.60v4.64h-4.60zM920.55 437.05h4.60v4.63h-4.60zM925.10 212.39h4.60v9.22h-4.60zM925.10 441.63h4.60v13.80h-4.60zM929.65 212.39h4.60v9.22h-4.60zM929.65 441.63h4.60v13.80h-4.60zM934.20 212.39h4.60v9.22h-4.60zM934.20 437.05h4.60v18.39h-4.60zM938.75 212.39h4.60v4.64h-4.60zM938.75 441.63h4.60v18.39h-4.60zM943.30 216.97h4.60v4.64h-4.60zM943.30 437.05h4.60v13.80h-4.60zM947.85 212.39h4.60v9.22h-4.60zM947.85 441.63h4.60v18.39h-4.60zM952.40 212.39h4.60v9.22h-4.60zM952.40 441.63h4.60v13.80h-4.60zM956.95 212.39h4.60v9.22h-4.60zM956.95 441.63h4.60v13.80h-4.60zM961.50 212.39h4.60v9.22h-4.60zM961.50 441.63h4.60v13.80h-4.60zM966.05 212.39h4.60v4.64h-4.60zM966.05 441.63h4.60v13.80h-4.60zM970.60 212.39h4.60v4.64h-4.60zM970.60 441.63h4.60v18.39h-4.60zM975.15 216.97h4.60v4.64h-4.60zM975.15 441.63h4.60v13.80h-4.60zM979.70 216.97h4.60v4.64h-4.60zM979.70 437.05h4.60v9.22h-4.60zM984.25 221.56h4.60v4.64h-4.60zM984.25 437.05h4.60v4.63h-4.60zM988.80 216.97h4.60v4.64h-4.60zM988.80 437.05h4.60v18.39h-4.60zM993.35 226.14h4.60v18.39h-4.60zM993.35 404.95h4.60v22.97h-4.60zM997.90 216.97h4.60v4.64h-4.60zM997.90 226.14h4.60v18.39h-4.60zM997.90 404.95h4.60v32.14h-4.60zM1002.45 226.14h4.60v18.39h-4.60zM1002.45 404.95h4.60v27.56h-4.60zM1007.00 235.31h4.60v13.81h-4.60zM1007.00 395.78h4.60v13.80h-4.60zM1007.00 414.12h4.60v4.63h-4.60zM1011.55 235.31h4.60v18.39h-4.60zM1011.55 400.37h4.60v22.97h-4.60zM1016.10 230.73h4.60v18.39h-4.60zM1016.10 404.95h4.60v18.39h-4.60z" fill="#6478e8"/>
<path d="M665.75 262.82h4.60v9.22h-4.60zM665.75 418.71h4.60v13.80h-4.60zM670.30 262.82h4.60v9.22h-4.60zM670.30 276.57h4.60v4.63h-4.60zM670.30 418.71h4.60v13.80h-4.60zM674.85 253.65h4.60v18.39h-4.60zM674.85 418.71h4.60v18.39h-4.60zM679.40 230.73h4.60v18.39h-4.60zM679.40 437.05h4.60v4.63h-4.60zM683.95 230.73h4.60v13.81h-4.60zM683.95 437.05h4.60v4.63h-4.60zM688.50 230.73h4.60v13.81h-4.60zM688.50 437.05h4.60v9.22h-4.60zM693.05 221.56h4.60v9.22h-4.60zM693.05 446.22h4.60v4.63h-4.60zM697.60 221.56h4.60v4.64h-4.60zM697.60 446.22h4.60v4.63h-4.60zM702.15 221.56h4.60v4.64h-4.60zM702.15 446.22h4.60v4.63h-4.60zM706.70 221.56h4.60v4.64h-4.60zM706.70 446.22h4.60v9.22h-4.60zM711.25 221.56h4.60v9.22h-4.60zM711.25 446.22h4.60v4.63h-4.60zM715.80 221.56h4.60v4.64h-4.60zM715.80 446.22h4.60v4.63h-4.60zM720.35 221.56h4.60v4.64h-4.60zM720.35 446.22h4.60v9.22h-4.60zM724.90 216.97h4.60v9.22h-4.60zM724.90 446.22h4.60v9.22h-4.60zM729.45 221.56h4.60v4.64h-4.60zM729.45 446.22h4.60v4.63h-4.60zM734.00 221.56h4.60v4.64h-4.60zM734.00 446.22h4.60v4.63h-4.60zM738.55 221.56h4.60v4.64h-4.60zM738.55 446.22h4.60v9.22h-4.60zM743.10 216.97h4.60v9.22h-4.60zM743.10 446.22h4.60v9.22h-4.60zM747.65 221.56h4.60v4.64h-4.60zM747.65 446.22h4.60v9.22h-4.60zM752.20 221.56h4.60v4.64h-4.60zM752.20 446.22h4.60v4.63h-4.60zM756.75 221.56h4.60v4.64h-4.60zM756.75 446.22h4.60v9.22h-4.60zM761.30 221.56h4.60v4.64h-4.60zM761.30 446.22h4.60v4.63h-4.60zM765.85 216.97h4.60v9.22h-4.60zM765.85 446.22h4.60v9.22h-4.60zM770.40 221.56h4.60v4.64h-4.60zM770.40 446.22h4.60v4.63h-4.60zM774.95 221.56h4.60v9.22h-4.60zM774.95 446.22h4.60v4.63h-4.60zM779.50 221.56h4.60v4.64h-4.60zM779.50 446.22h4.60v4.63h-4.60zM784.05 221.56h4.60v4.64h-4.60zM784.05 446.22h4.60v4.63h-4.60zM788.60 216.97h4.60v9.22h-4.60zM788.60 446.22h4.60v9.22h-4.60zM793.15 221.56h4.60v4.64h-4.60zM793.15 446.22h4.60v4.63h-4.60zM797.70 221.56h4.60v4.64h-4.60zM797.70 446.22h4.60v9.22h-4.60zM802.25 221.56h4.60v4.64h-4.60zM802.25 446.22h4.60v9.22h-4.60zM806.80 221.56h4.60v4.64h-4.60zM806.80 446.22h4.60v9.22h-4.60zM811.35 221.56h4.60v4.64h-4.60zM811.35 446.22h4.60v9.22h-4.60zM815.90 221.56h4.60v9.22h-4.60zM815.90 446.22h4.60v4.63h-4.60zM820.45 221.56h4.60v4.64h-4.60zM820.45 446.22h4.60v4.63h-4.60zM825.00 221.56h4.60v4.64h-4.60zM825.00 446.22h4.60v4.63h-4.60zM829.55 221.56h4.60v4.64h-4.60zM829.55 446.22h4.60v9.22h-4.60zM834.10 221.56h4.60v4.64h-4.60zM834.10 446.22h4.60v9.22h-4.60zM838.65 221.56h4.60v4.64h-4.60zM838.65 446.22h4.60v4.63h-4.60zM843.20 221.56h4.60v4.64h-4.60zM843.20 446.22h4.60v4.63h-4.60zM847.75 221.56h4.60v4.64h-4.60zM847.75 446.22h4.60v4.63h-4.60zM852.30 221.56h4.60v4.64h-4.60zM852.30 446.22h4.60v4.63h-4.60zM856.85 216.97h4.60v9.22h-4.60zM856.85 446.22h4.60v9.22h-4.60zM861.40 221.56h4.60v4.64h-4.60zM861.40 446.22h4.60v9.22h-4.60zM865.95 221.56h4.60v4.64h-4.60zM865.95 446.22h4.60v4.63h-4.60zM870.50 221.56h4.60v4.64h-4.60zM870.50 446.22h4.60v9.22h-4.60zM875.05 221.56h4.60v4.64h-4.60zM875.05 446.22h4.60v4.63h-4.60zM879.60 216.97h4.60v9.22h-4.60zM879.60 446.22h4.60v9.22h-4.60zM884.15 221.56h4.60v4.64h-4.60zM884.15 446.22h4.60v9.22h-4.60zM888.70 221.56h4.60v4.64h-4.60zM888.70 446.22h4.60v4.63h-4.60zM893.25 216.97h4.60v9.22h-4.60zM893.25 446.22h4.60v9.22h-4.60zM897.80 221.56h4.60v9.22h-4.60zM897.80 441.63h4.60v4.63h-4.60zM902.35 221.56h4.60v4.64h-4.60zM902.35 441.63h4.60v4.63h-4.60zM906.90 221.56h4.60v4.64h-4.60zM906.90 437.05h4.60v13.80h-4.60zM911.45 221.56h4.60v4.64h-4.60zM911.45 437.05h4.60v4.63h-4.60zM916.00 221.56h4.60v4.64h-4.60zM916.00 432.46h4.60v4.63h-4.60zM920.55 221.56h4.60v4.64h-4.60zM920.55 427.88h4.60v9.22h-4.60zM925.10 221.56h4.60v4.64h-4.60zM925.10 432.46h4.60v9.22h-4.60zM929.65 221.56h4.60v4.64h-4.60zM929.65 432.46h4.60v9.22h-4.60zM934.20 221.56h4.60v4.64h-4.60zM934.20 432.46h4.60v4.63h-4.60zM938.75 216.97h4.60v9.22h-4.60zM938.75 437.05h4.60v4.63h-4.60zM943.30 221.56h4.60v4.64h-4.60zM943.30 432.46h4.60v4.63h-4.60zM947.85 221.56h4.60v4.64h-4.60zM947.85 437.05h4.60v4.63h-4.60zM952.40 221.56h4.60v4.64h-4.60zM952.40 432.46h4.60v9.22h-4.60zM956.95 221.56h4.60v4.64h-4.60zM956.95 432.46h4.60v9.22h-4.60zM961.50 221.56h4.60v4.64h-4.60zM961.50 432.46h4.60v9.22h-4.60zM966.05 216.97h4.60v9.22h-4.60zM966.05 437.05h4.60v4.63h-4.60zM970.60 216.97h4.60v9.22h-4.60zM970.60 437.05h4.60v4.63h-4.60zM975.15 221.56h4.60v4.64h-4.60zM975.15 432.46h4.60v9.22h-4.60zM979.70 221.56h4.60v9.22h-4.60zM979.70 423.29h4.60v13.80h-4.60zM984.25 226.14h4.60v4.64h-4.60zM984.25 423.29h4.60v13.80h-4.60zM988.80 221.56h4.60v9.22h-4.60zM988.80 427.88h4.60v9.22h-4.60zM993.35 244.48h4.60v18.39h-4.60zM993.35 395.78h4.60v9.22h-4.60zM997.90 244.48h4.60v9.22h-4.60zM997.90 400.37h4.60v4.63h-4.60zM1002.45 244.48h4.60v18.39h-4.60zM1002.45 391.20h4.60v13.80h-4.60zM1007.00 249.07h4.60v18.39h-4.60zM1007.00 386.61h4.60v9.22h-4.60zM1011.55 253.65h4.60v13.80h-4.60zM1011.55 386.61h4.60v13.80h-4.60zM1016.10 249.07h4.60v18.39h-4.60zM1016.10 386.61h4.60v18.39h-4.60z" fill="#6494a8"/>
<path d="M665.75 271.99h4.60v13.80h-4.60zM665.75 404.95h4.60v13.80h-4.60zM670.30 271.99h4.60v4.63h-4.60zM670.30 281.16h4.60v4.63h-4.60zM670.30 294.91h4.60v4.63h-4.60zM670.30 404.95h4.60v13.80h-4.60zM674.85 271.99h4.60v9.22h-4.60zM674.85 404.95h4.60v13.80h-4.60zM679.40 249.07h4.60v4.64h-4.60zM679.40 423.29h4.60v13.80h-4.60zM683.95 244.48h4.60v4.64h-4.60zM683.95 423.29h4.60v13.80h-4.60zM688.50 244.48h4.60v4.64h-4.60zM688.50 423.29h4.60v13.80h-4.60zM693.05 441.63h4.60v4.63h-4.60zM697.60 226.14h4.60v4.64h-4.60zM697.60 441.63h4.60v4.63h-4.60zM702.15 226.14h4.60v4.64h-4.60zM702.15 441.63h4.60v4.63h-4.60zM706.70 226.14h4.60v4.64h-4.60zM706.70 441.63h4.60v4.63h-4.60zM711.25 441.63h4.60v4.63h-4.60zM715.80 226.14h4.60v4.64h-4.60zM715.80 441.63h4.60v4.63h-4.60zM720.35 226.14h4.60v4.64h-4.60zM720.35 441.63h4.60v4.63h-4.60zM724.90 226.14h4.60v4.64h-4.60zM724.90 441.63h4.60v4.63h-4.60zM729.45 226.14h4.60v4.64h-4.60zM729.45 441.63h4.60v4.63h-4.60zM734.00 226.14h4.60v4.64h-4.60zM734.00 441.63h4.60v4.63h-4.60zM738.55 226.14h4.60v4.64h-4.60zM738.55 441.63h4.60v4.63h-4.60zM743.10 226.14h4.60v4.64h-4.60zM747.65 226.14h4.60v4.64h-4.60zM747.65 441.63h4.60v4.63h-4.60zM752.20 226.14h4.60v4.64h-4.60zM752.20 441.63h4.60v4.63h-4.60zM756.75 226.14h4.60v4.64h-4.60zM761.30 226.14h4.60v4.64h-4.60zM761.30 441.63h4.60v4.63h-4.60zM765.85 226.14h4.60v4.64h-4.60zM770.40 226.14h4.60v4.64h-4.60zM770.40 441.63h4.60v4.63h-4.60zM774.95 441.63h4.60v4.63h-4.60zM779.50 226.14h4.60v4.64h-4.60zM779.50 441.63h4.60v4.63h-4.60zM784.05 226.14h4.60v4.64h-4.60zM784.05 441.63h4.60v4.63h-4.60zM788.60 226.14h4.60v4.64h-4.60zM793.15 226.14h4.60v4.64h-4.60zM793.15 441.63h4.60v4.63h-4.60zM797.70 226.14h4.60v4.64h-4.60zM797.70 441.63h4.60v4.63h-4.60zM802.25 226.14h4.60v4.64h-4.60zM806.80 226.14h4.60v4.64h-4.60zM806.80 441.63h4.60v4.63h-4.60zM811.35 226.14h4.60v4.64h-4.60zM811.35 441.63h4.60v4.63h-4.60zM815.90 441.63h4.60v4.63h-4.60zM820.45 226.14h4.60v4.64h-4.60zM820.45 441.63h4.60v4.63h-4.60zM825.00 226.14h4.60v4.64h-4.60zM825.00 441.63h4.60v4.63h-4.60zM829.55 226.14h4.60v4.64h-4.60zM834.10 226.14h4.60v4.64h-4.60zM834.10 441.63h4.60v4.63h-4.60zM838.65 226.14h4.60v4.64h-4.60zM838.65 441.63h4.60v4.63h-4.60zM843.20 226.14h4.60v4.64h-4.60zM843.20 441.63h4.60v4.63h-4.60zM847.75 226.14h4.60v4.64h-4.60zM847.75 441.63h4.60v4.63h-4.60zM852.30 226.14h4.60v4.64h-4.60zM852.30 441.63h4.60v4.63h-4.60zM856.85 226.14h4.60v4.64h-4.60zM861.40 226.14h4.60v4.64h-4.60zM861.40 441.63h4.60v4.63h-4.60zM865.95 226.14h4.60v4.64h-4.60zM865.95 441.63h4.60v4.63h-4.60zM870.50 226.14h4.60v4.64h-4.60zM870.50 441.63h4.60v4.63h-4.60zM875.05 226.14h4.60v4.64h-4.60zM875.05 441.63h4.60v4.63h-4.60zM879.60 226.14h4.60v4.64h-4.60zM884.15 226.14h4.60v4.64h-4.60zM884.15 441.63h4.60v4.63h-4.60zM888.70 226.14h4.60v4.64h-4.60zM888.70 441.63h4.60v4.63h-4.60zM893.25 226.14h4.60v4.64h-4.60zM893.25 441.63h4.60v4.63h-4.60zM897.80 437.05h4.60v4.63h-4.60zM902.35 226.14h4.60v4.64h-4.60zM902.35 437.05h4.60v4.63h-4.60zM906.90 226.14h4.60v4.64h-4.60zM911.45 226.14h4.60v4.64h-4.60zM911.45 423.29h4.60v13.80h-4.60zM916.00 226.14h4.60v4.64h-4.60zM916.00 423.29h4.60v9.22h-4.60zM920.55 226.14h4.60v4.64h-4.60zM920.55 418.71h4.60v9.22h-4.60zM925.10 226.14h4.60v4.64h-4.60zM925.10 423.29h4.60v9.22h-4.60zM929.65 226.14h4.60v4.64h-4.60zM929.65 427.88h4.60v4.63h-4.60zM934.20 226.14h4.60v4.64h-4.60zM934.20 423.29h4.60v9.22h-4.60zM938.75 226.14h4.60v4.64h-4.60zM938.75 423.29h4.60v13.80h-4.60zM943.30 226.14h4.60v4.64h-4.60zM943.30 423.29h4.60v9.22h-4.60zM947.85 226.14h4.60v4.64h-4.60zM947.85 423.29h4.60v13.80h-4.60zM952.40 226.14h4.60v4.64h-4.60zM952.40 423.29h4.60v9.22h-4.60zM956.95 226.14h4.60v4.64h-4.60zM956.95 423.29h4.60v9.22h-4.60zM961.50 226.14h4.60v4.64h-4.60zM961.50 423.29h4.60v9.22h-4.60zM966.05 226.14h4.60v4.64h-4.60zM966.05 423.29h4.60v13.80h-4.60zM970.60 226.14h4.60v4.64h-4.60zM970.60 427.88h4.60v9.22h-4.60zM975.15 226.14h4.60v4.64h-4.60zM975.15 423.29h4.60v9.22h-4.60zM979.70 230.73h4.60v4.64h-4.60zM979.70 418.71h4.60v4.63h-4.60zM984.25 230.73h4.60v13.81h-4.60zM984.25 404.95h4.60v18.39h-4.60zM988.80 418.71h4.60v9.22h-4.60zM993.35 262.82h4.60v4.63h-4.60zM993.35 386.61h4.60v9.22h-4.60zM997.90 253.65h4.60v13.80h-4.60zM997.90 386.61h4.60v13.80h-4.60zM1002.45 262.82h4.60v4.63h-4.60zM1002.45 386.61h4.60v4.63h-4.60zM1007.00 267.41h4.60v59.65h-4.60zM1007.00 331.59h4.60v9.22h-4.60zM1007.00 345.35h4.60v41.31h-4.60zM1011.55 267.41h4.60v55.07h-4.60zM1011.55 331.59h4.60v9.22h-4.60zM1011.55 349.93h4.60v9.22h-4.60zM1011.55 363.69h4.60v22.97h-4.60zM1016.10 267.41h4.60v18.39h-4.60zM1016.10 290.33h4.60v13.80h-4.60zM1016.10 313.25h4.60v9.22h-4.60zM1016.10 349.93h4.60v9.22h-4.60zM1016.10 368.27h4.60v18.39h-4.60z" fill="#64a878"/>
<path d="M665.75 285.74h4.60v55.07h-4.60zM665.75 345.35h4.60v13.80h-4.60zM665.75 363.69h4.60v41.31h-4.60zM670.30 285.74h4.60v9.22h-4.60zM670.30 299.50h4.60v41.31h-4.60zM670.30 345.35h4.60v59.65h-4.60zM674.85 281.16h4.60v22.97h-4.60zM674.85 308.67h4.60v13.80h-4.60zM674.85 331.59h4.60v4.63h-4.60zM674.85 349.93h4.60v9.22h-4.60zM674.85 368.27h4.60v9.22h-4.60zM674.85 386.61h4.60v9.22h-4.60zM674.85 400.37h4.60v4.63h-4.60zM679.40 253.65h4.60v9.22h-4.60zM679.40 418.71h4.60v4.63h-4.60zM683.95 249.07h4.60v13.80h-4.60zM688.50 249.07h4.60v13.80h-4.60zM688.50 418.71h4.60v4.63h-4.60zM693.05 230.73h4.60v13.81h-4.60zM693.05 437.05h4.60v4.63h-4.60zM697.60 230.73h4.60v4.64h-4.60zM702.15 230.73h4.60v13.81h-4.60zM702.15 437.05h4.60v4.63h-4.60zM706.70 230.73h4.60v9.22h-4.60zM711.25 230.73h4.60v13.81h-4.60zM711.25 437.05h4.60v4.63h-4.60zM715.80 230.73h4.60v13.81h-4.60zM720.35 230.73h4.60v4.64h-4.60zM729.45 230.73h4.60v9.22h-4.60zM729.45 437.05h4.60v4.63h-4.60zM734.00 230.73h4.60v9.22h-4.60zM738.55 230.73h4.60v4.64h-4.60zM743.10 441.63h4.60v4.63h-4.60zM747.65 230.73h4.60v4.64h-4.60zM752.20 230.73h4.60v4.64h-4.60zM756.75 441.63h4.60v4.63h-4.60zM761.30 230.73h4.60v13.81h-4.60zM761.30 437.05h4.60v4.63h-4.60zM765.85 441.63h4.60v4.63h-4.60zM770.40 230.73h4.60v4.64h-4.60zM774.95 230.73h4.60v13.81h-4.60zM774.95 437.05h4.60v4.63h-4.60zM779.50 230.73h4.60v13.81h-4.60zM779.50 437.05h4.60v4.63h-4.60zM784.05 230.73h4.60v9.22h-4.60zM788.60 230.73h4.60v4.64h-4.60zM788.60 441.63h4.60v4.63h-4.60zM793.15 230.73h4.60v9.22h-4.60zM793.15 437.05h4.60v4.63h-4.60zM797.70 230.73h4.60v4.64h-4.60zM802.25 230.73h4.60v4.64h-4.60zM802.25 441.63h4.60v4.63h-4.60zM806.80 230.73h4.60v4.64h-4.60zM811.35 230.73h4.60v4.64h-4.60zM815.90 230.73h4.60v9.22h-4.60zM815.90 437.05h4.60v4.63h-4.60zM820.45 230.73h4.60v13.81h-4.60zM820.45 437.05h4.60v4.63h-4.60zM825.00 230.73h4.60v13.81h-4.60zM829.55 230.73h4.60v4.64h-4.60zM829.55 441.63h4.60v4.63h-4.60zM834.10 230.73h4.60v4.64h-4.60zM838.65 230.73h4.60v9.22h-4.60zM843.20 230.73h4.60v4.64h-4.60zM847.75 230.73h4.60v4.64h-4.60zM852.30 230.73h4.60v4.64h-4.60zM856.85 441.63h4.60v4.63h-4.60zM865.95 230.73h4.60v4.64h-4.60zM870.50 230.73h4.60v4.64h-4.60zM875.05 230.73h4.60v4.64h-4.60zM879.60 441.63h4.60v4.63h-4.60zM888.70 230.73h4.60v9.22h-4.60zM888.70 437.05h4.60v4.63h-4.60zM893.25 437.05h4.60v4.63h-4.60zM897.80 230.73h4.60v9.22h-4.60zM897.80 423.29h4.60v13.80h-4.60zM902.35 230.73h4.60v4.64h-4.60zM902.35 427.88h4.60v9.22h-4.60zM906.90 427.88h4.60v9.22h-4.60zM911.45 230.73h4.60v13.81h-4.60zM911.45 418.71h4.60v4.63h-4.60zM916.00 230.73h4.60v4.64h-4.60zM916.00 409.54h4.60v13.80h-4.60zM920.55 230.73h4.60v9.22h-4.60zM920.55 404.95h4.60v13.80h-4.60zM925.10 418.71h4.60v4.63h-4.60zM929.65 418.71h4.60v9.22h-4.60zM934.20 230.73h4.60v4.64h-4.60zM934.20 409.54h4.60v4.63h-4.60zM934.20 418.71h4.60v4.63h-4.60zM943.30 230.73h4.60v9.22h-4.60zM943.30 404.95h4.60v18.39h-4.60zM947.85 409.54h4.60v4.63h-4.60zM947.85 418.71h4.60v4.63h-4.60zM952.40 230.73h4.60v4.64h-4.60zM952.40 409.54h4.60v4.63h-4.60zM952.40 418.71h4.60v4.63h-4.60zM956.95 230.73h4.60v4.64h-4.60zM956.95 409.54h4.60v13.80h-4.60zM961.50 230.73h4.60v4.64h-4.60zM961.50 409.54h4.60v4.63h-4.60zM961.50 418.71h4.60v4.63h-4.60zM966.05 418.71h4.60v4.63h-4.60zM970.60 418.71h4.60v9.22h-4.60zM975.15 230.73h4.60v4.64h-4.60zM975.15 409.54h4.60v4.63h-4.60zM975.15 418.71h4.60v4.63h-4.60zM979.70 235.31h4.60v9.22h-4.60zM979.70 404.95h4.60v13.80h-4.60zM984.25 244.48h4.60v4.64h-4.60zM988.80 230.73h4.60v13.81h-4.60zM988.80 404.95h4.60v13.80h-4.60zM993.35 267.41h4.60v18.39h-4.60zM993.35 294.91h4.60v9.22h-4.60zM993.35 313.25h4.60v9.22h-4.60zM993.35 331.59h4.60v9.22h-4.60zM993.35 349.93h4.60v9.22h-4.60zM993.35 368.27h4.60v9.22h-4.60zM993.35 382.03h4.60v4.63h-4.60zM997.90 267.41h4.60v4.63h-4.60zM997.90 276.57h4.60v9.22h-4.60zM997.90 294.91h4.60v4.63h-4.60zM997.90 313.25h4.60v4.63h-4.60zM997.90 368.27h4.60v9.22h-4.60zM997.90 382.03h4.60v4.63h-4.60zM1002.45 267.41h4.60v18.39h-4.60zM1002.45 294.91h4.60v9.22h-4.60zM1002.45 313.25h4.60v4.63h-4.60zM1002.45 331.59h4.60v4.63h-4.60zM1002.45 349.93h4.60v4.63h-4.60zM1002.45 368.27h4.60v9.22h-4.60zM1002.45 382.03h4.60v4.63h-4.60zM1007.00 327.01h4.60v4.63h-4.60zM1007.00 340.76h4.60v4.63h-4.60zM1011.55 322.42h4.60v9.22h-4.60zM1011.55 340.76h4.60v9.22h-4.60zM1011.55 359.10h4.60v4.63h-4.60zM1016.10 285.74h4.60v4.63h-4.60zM1016.10 304.08h4.60v9.22h-4.60zM1016.10 322.42h4.60v27.56h-4.60zM1016.10 359.10h4.60v9.22h-4.60z" fill="#68b848"/>
<path d="M665.75 340.76h4.60v4.63h-4.60zM665.75 359.10h4.60v4.63h-4.60zM670.30 340.76h4.60v4.63h-4.60zM674.85 304.08h4.60v4.63h-4.60zM674.85 322.42h4.60v9.22h-4.60zM674.85 336.18h4.60v13.80h-4.60zM674.85 359.10h4.60v9.22h-4.60zM674.85 377.44h4.60v9.22h-4.60zM674.85 395.78h4.60v4.63h-4.60zM679.40 262.82h4.60v4.63h-4.60zM679.40 404.95h4.60v9.22h-4.60zM683.95 262.82h4.60v4.63h-4.60zM683.95 418.71h4.60v4.63h-4.60zM688.50 262.82h4.60v4.63h-4.60zM693.05 244.48h4.60v4.64h-4.60zM693.05 432.46h4.60v4.63h-4.60zM697.60 235.31h4.60v9.22h-4.60zM697.60 437.05h4.60v4.63h-4.60zM702.15 244.48h4.60v4.64h-4.60zM706.70 239.90h4.60v4.64h-4.60zM706.70 437.05h4.60v4.63h-4.60zM711.25 244.48h4.60v4.64h-4.60zM715.80 244.48h4.60v4.64h-4.60zM715.80 437.05h4.60v4.63h-4.60zM720.35 235.31h4.60v9.22h-4.60zM720.35 437.05h4.60v4.63h-4.60zM724.90 230.73h4.60v13.81h-4.60zM724.90 437.05h4.60v4.63h-4.60zM729.45 239.90h4.60v9.22h-4.60zM734.00 239.90h4.60v9.22h-4.60zM734.00 437.05h4.60v4.63h-4.60zM738.55 235.31h4.60v9.22h-4.60zM738.55 437.05h4.60v4.63h-4.60zM743.10 230.73h4.60v9.22h-4.60zM747.65 235.31h4.60v9.22h-4.60zM747.65 437.05h4.60v4.63h-4.60zM752.20 235.31h4.60v9.22h-4.60zM752.20 437.05h4.60v4.63h-4.60zM756.75 230.73h4.60v9.22h-4.60zM761.30 244.48h4.60v4.64h-4.60zM765.85 230.73h4.60v13.81h-4.60zM765.85 437.05h4.60v4.63h-4.60zM770.40 235.31h4.60v13.81h-4.60zM770.40 437.05h4.60v4.63h-4.60zM774.95 244.48h4.60v4.64h-4.60zM779.50 244.48h4.60v4.64h-4.60zM784.05 239.90h4.60v4.64h-4.60zM784.05 437.05h4.60v4.63h-4.60zM788.60 235.31h4.60v9.22h-4.60zM788.60 437.05h4.60v4.63h-4.60zM793.15 239.90h4.60v9.22h-4.60zM797.70 235.31h4.60v9.22h-4.60zM797.70 437.05h4.60v4.63h-4.60zM802.25 235.31h4.60v9.22h-4.60zM802.25 437.05h4.60v4.63h-4.60zM806.80 235.31h4.60v9.22h-4.60zM806.80 437.05h4.60v4.63h-4.60zM811.35 235.31h4.60v9.22h-4.60zM811.35 437.05h4.60v4.63h-4.60zM815.90 239.90h4.60v9.22h-4.60zM820.45 244.48h4.60v4.64h-4.60zM820.45 432.46h4.60v4.63h-4.60zM825.00 244.48h4.60v4.64h-4.60zM825.00 437.05h4.60v4.63h-4.60zM829.55 235.31h4.60v9.22h-4.60zM829.55 437.05h4.60v4.63h-4.60zM834.10 235.31h4.60v9.22h-4.60zM834.10 437.05h4.60v4.63h-4.60zM838.65 239.90h4.60v9.22h-4.60zM838.65 437.05h4.60v4.63h-4.60zM843.20 235.31h4.60v9.22h-4.60zM843.20 437.05h4.60v4.63h-4.60zM847.75 235.31h4.60v9.22h-4.60zM847.75 437.05h4.60v4.63h-4.60zM852.30 235.31h4.60v9.22h-4.60zM852.30 437.05h4.60v4.63h-4.60zM856.85 230.73h4.60v13.81h-4.60zM856.85 437.05h4.60v4.63h-4.60zM861.40 230.73h4.60v13.81h-4.60zM861.40 437.05h4.60v4.63h-4.60zM865.95 235.31h4.60v9.22h-4.60zM865.95 437.05h4.60v4.63h-4.60zM870.50 235.31h4.60v9.22h-4.60zM870.50 437.05h4.60v4.63h-4.60zM875.05 235.31h4.60v9.22h-4.60zM875.05 437.05h4.60v4.63h-4.60zM879.60 230.73h4.60v13.81h-4.60zM879.60 437.05h4.60v4.63h-4.60zM884.15 230.73h4.60v13.81h-4.60zM884.15 437.05h4.60v4.63h-4.60zM888.70 239.90h4.60v4.64h-4.60zM888.70 427.88h4.60v9.22h-4.60zM893.25 230.73h4.60v13.81h-4.60zM897.80 239.90h4.60v9.22h-4.60zM902.35 235.31h4.60v9.22h-4.60zM902.35 423.29h4.60v4.63h-4.60zM906.90 230.73h4.60v13.81h-4.60zM906.90 418.71h4.60v9.22h-4.60zM911.45 244.48h4.60v4.64h-4.60zM911.45 404.95h4.60v13.80h-4.60zM916.00 235.31h4.60v9.22h-4.60zM916.00 404.95h4.60v4.63h-4.60zM920.55 239.90h4.60v9.22h-4.60zM925.10 230.73h4.60v13.81h-4.60zM925.10 404.95h4.60v13.80h-4.60zM929.65 230.73h4.60v13.81h-4.60zM929.65 404.95h4.60v13.80h-4.60zM934.20 235.31h4.60v9.22h-4.60zM934.20 404.95h4.60v4.63h-4.60zM934.20 414.12h4.60v4.63h-4.60zM938.75 230.73h4.60v13.81h-4.60zM938.75 404.95h4.60v18.39h-4.60zM943.30 239.90h4.60v9.22h-4.60zM947.85 230.73h4.60v13.81h-4.60zM947.85 404.95h4.60v4.63h-4.60zM947.85 414.12h4.60v4.63h-4.60zM952.40 235.31h4.60v9.22h-4.60zM952.40 404.95h4.60v4.63h-4.60zM952.40 414.12h4.60v4.63h-4.60zM956.95 235.31h4.60v9.22h-4.60zM956.95 404.95h4.60v4.63h-4.60zM961.50 235.31h4.60v9.22h-4.60zM961.50 404.95h4.60v4.63h-4.60zM961.50 414.12h4.60v4.63h-4.60zM966.05 230.73h4.60v13.81h-4.60zM966.05 404.95h4.60v13.80h-4.60zM970.60 230.73h4.60v9.22h-4.60zM970.60 404.95h4.60v13.80h-4.60zM975.15 235.31h4.60v9.22h-4.60zM975.15 404.95h4.60v4.63h-4.60zM975.15 414.12h4.60v4.63h-4.60zM979.70 244.48h4.60v4.64h-4.60zM979.70 400.37h4.60v4.63h-4.60zM984.25 400.37h4.60v4.63h-4.60zM988.80 244.48h4.60v4.64h-4.60zM993.35 285.74h4.60v9.22h-4.60zM993.35 304.08h4.60v9.22h-4.60zM993.35 322.42h4.60v9.22h-4.60zM993.35 340.76h4.60v9.22h-4.60zM993.35 359.10h4.60v9.22h-4.60zM993.35 377.44h4.60v4.63h-4.60zM997.90 271.99h4.60v4.63h-4.60zM997.90 285.74h4.60v9.22h-4.60zM997.90 299.50h4.60v13.80h-4.60zM997.90 317.84h4.60v50.48h-4.60zM997.90 377.44h4.60v4.63h-4.60zM1002.45 285.74h4.60v9.22h-4.60zM1002.45 304.08h4.60v9.22h-4.60zM1002.45 317.84h4.60v13.80h-4.60zM1002.45 336.18h4.60v13.80h-4.60zM1002.45 354.52h4.60v13.80h-4.60zM1002.45 377.44h4.60v4.63h-4.60z" fill="#94cc0c"/>
<path d="M679.40 267.41h4.60v18.39h-4.60zM679.40 294.91h4.60v9.22h-4.60zM679.40 313.25h4.60v4.63h-4.60zM679.40 331.59h4.60v4.63h-4.60zM679.40 349.93h4.60v4.63h-4.60zM679.40 368.27h4.60v4.63h-4.60zM679.40 386.61h4.60v9.22h-4.60zM679.40 414.12h4.60v4.63h-4.60zM683.95 276.57h4.60v4.63h-4.60zM683.95 404.95h4.60v13.80h-4.60zM688.50 276.57h4.60v4.63h-4.60zM688.50 368.27h4.60v4.63h-4.60zM688.50 386.61h4.60v4.63h-4.60zM688.50 404.95h4.60v13.80h-4.60zM693.05 423.29h4.60v9.22h-4.60zM697.60 244.48h4.60v4.64h-4.60zM697.60 432.46h4.60v4.63h-4.60zM702.15 423.29h4.60v13.80h-4.60zM706.70 244.48h4.60v4.64h-4.60zM706.70 427.88h4.60v9.22h-4.60zM711.25 423.29h4.60v13.80h-4.60zM715.80 423.29h4.60v13.80h-4.60zM720.35 244.48h4.60v4.64h-4.60zM720.35 427.88h4.60v9.22h-4.60zM724.90 244.48h4.60v4.64h-4.60zM729.45 423.29h4.60v13.80h-4.60zM734.00 423.29h4.60v13.80h-4.60zM738.55 244.48h4.60v4.64h-4.60zM738.55 432.46h4.60v4.63h-4.60zM743.10 239.90h4.60v9.22h-4.60zM743.10 437.05h4.60v4.63h-4.60zM747.65 244.48h4.60v4.64h-4.60zM747.65 427.88h4.60v9.22h-4.60zM752.20 244.48h4.60v4.64h-4.60zM752.20 427.88h4.60v9.22h-4.60zM756.75 239.90h4.60v4.64h-4.60zM756.75 437.05h4.60v4.63h-4.60zM761.30 423.29h4.60v13.80h-4.60zM765.85 244.48h4.60v4.64h-4.60zM770.40 423.29h4.60v13.80h-4.60zM774.95 423.29h4.60v13.80h-4.60zM779.50 423.29h4.60v13.80h-4.60zM784.05 244.48h4.60v4.64h-4.60zM784.05 423.29h4.60v13.80h-4.60zM788.60 244.48h4.60v4.64h-4.60zM793.15 423.29h4.60v13.80h-4.60zM797.70 244.48h4.60v4.64h-4.60zM797.70 427.88h4.60v4.63h-4.60zM802.25 244.48h4.60v4.64h-4.60zM806.80 244.48h4.60v4.64h-4.60zM806.80 427.88h4.60v9.22h-4.60zM811.35 244.48h4.60v4.64h-4.60zM811.35 432.46h4.60v4.63h-4.60zM815.90 423.29h4.60v13.80h-4.60zM820.45 423.29h4.60v9.22h-4.60zM825.00 423.29h4.60v13.80h-4.60zM829.55 244.48h4.60v4.64h-4.60zM829.55 432.46h4.60v4.63h-4.60zM834.10 244.48h4.60v4.64h-4.60zM834.10 432.46h4.60v4.63h-4.60zM838.65 423.29h4.60v13.80h-4.60zM843.20 244.48h4.60v4.64h-4.60zM843.20 427.88h4.60v9.22h-4.60zM847.75 244.48h4.60v4.64h-4.60zM847.75 427.88h4.60v9.22h-4.60zM852.30 244.48h4.60v4.64h-4.60zM852.30 427.88h4.60v9.22h-4.60zM856.85 244.48h4.60v4.64h-4.60zM861.40 244.48h4.60v4.64h-4.60zM865.95 244.48h4.60v4.64h-4.60zM865.95 423.29h4.60v13.80h-4.60zM870.50 244.48h4.60v4.64h-4.60zM870.50 432.46h4.60v4.63h-4.60zM875.05 244.48h4.60v4.64h-4.60zM875.05 427.88h4.60v9.22h-4.60zM879.60 244.48h4.60v4.64h-4.60zM884.15 244.48h4.60v4.64h-4.60zM884.15 427.88h4.60v9.22h-4.60zM888.70 244.48h4.60v4.64h-4.60zM888.70 423.29h4.60v4.63h-4.60zM893.25 244.48h4.60v4.64h-4.60zM893.25 423.29h4.60v13.80h-4.60zM897.80 418.71h4.60v4.63h-4.60zM902.35 244.48h4.60v4.64h-4.60zM902.35 418.71h4.60v4.63h-4.60zM906.90 244.48h4.60v4.64h-4.60zM906.90 414.12h4.60v4.63h-4.60zM916.00 244.48h4.60v4.64h-4.60zM916.00 400.37h4.60v4.63h-4.60zM920.55 400.37h4.60v4.63h-4.60zM925.10 244.48h4.60v4.64h-4.60zM929.65 244.48h4.60v4.64h-4.60zM934.20 244.48h4.60v4.64h-4.60zM938.75 244.48h4.60v4.64h-4.60zM943.30 400.37h4.60v4.63h-4.60zM947.85 244.48h4.60v4.64h-4.60zM947.85 400.37h4.60v4.63h-4.60zM952.40 244.48h4.60v4.64h-4.60zM952.40 382.03h4.60v22.97h-4.60zM956.95 244.48h4.60v4.64h-4.60zM956.95 382.03h4.60v22.97h-4.60zM961.50 244.48h4.60v4.64h-4.60zM961.50 400.37h4.60v4.63h-4.60zM966.05 244.48h4.60v4.64h-4.60zM970.60 239.90h4.60v9.22h-4.60zM975.15 244.48h4.60v4.64h-4.60zM975.15 400.37h4.60v4.63h-4.60zM979.70 249.07h4.60v4.64h-4.60zM979.70 258.24h4.60v4.63h-4.60zM979.70 313.25h4.60v4.63h-4.60zM979.70 331.59h4.60v4.63h-4.60zM979.70 349.93h4.60v4.63h-4.60zM979.70 368.27h4.60v4.63h-4.60zM979.70 395.78h4.60v4.63h-4.60zM984.25 249.07h4.60v18.39h-4.60zM984.25 276.57h4.60v9.22h-4.60zM984.25 294.91h4.60v9.22h-4.60zM984.25 308.67h4.60v13.80h-4.60zM984.25 327.01h4.60v13.80h-4.60zM984.25 345.35h4.60v13.80h-4.60zM984.25 363.69h4.60v13.80h-4.60zM984.25 382.03h4.60v18.39h-4.60zM988.80 249.07h4.60v4.64h-4.60zM988.80 258.24h4.60v4.63h-4.60zM988.80 276.57h4.60v4.63h-4.60zM988.80 313.25h4.60v4.63h-4.60zM988.80 349.93h4.60v4.63h-4.60zM988.80 368.27h4.60v4.63h-4.60zM988.80 400.37h4.60v4.63h-4.60z" fill="#dcec00"/>
<path d="M679.40 285.74h4.60v9.22h-4.60zM679.40 317.84h4.60v4.63h-4.60zM679.40 336.18h4.60v4.63h-4.60zM679.40 354.52h4.60v4.63h-4.60zM679.40 372.86h4.60v4.63h-4.60zM679.40 382.03h4.60v4.63h-4.60zM679.40 400.37h4.60v4.63h-4.60zM683.95 267.41h4.60v9.22h-4.60zM683.95 281.16h4.60v4.63h-4.60zM683.95 294.91h4.60v9.22h-4.60zM683.95 313.25h4.60v9.22h-4.60zM683.95 331.59h4.60v4.63h-4.60zM683.95 349.93h4.60v9.22h-4.60zM683.95 368.27h4.60v9.22h-4.60zM683.95 386.61h4.60v9.22h-4.60zM683.95 400.37h4.60v4.63h-4.60zM688.50 267.41h4.60v9.22h-4.60zM688.50 281.16h4.60v4.63h-4.60zM688.50 294.91h4.60v9.22h-4.60zM688.50 313.25h4.60v9.22h-4.60zM688.50 331.59h4.60v9.22h-4.60zM688.50 349.93h4.60v9.22h-4.60zM688.50 372.86h4.60v4.63h-4.60zM688.50 391.20h4.60v4.63h-4.60zM688.50 400.37h4.60v4.63h-4.60zM693.05 249.07h4.60v13.80h-4.60zM697.60 423.29h4.60v9.22h-4.60zM702.15 249.07h4.60v13.80h-4.60zM706.70 249.07h4.60v4.64h-4.60zM706.70 423.29h4.60v4.63h-4.60zM711.25 249.07h4.60v13.80h-4.60zM715.80 249.07h4.60v9.22h-4.60zM720.35 249.07h4.60v4.64h-4.60zM720.35 423.29h4.60v4.63h-4.60zM724.90 423.29h4.60v13.80h-4.60zM729.45 249.07h4.60v13.80h-4.60zM734.00 249.07h4.60v13.80h-4.60zM738.55 423.29h4.60v9.22h-4.60zM743.10 423.29h4.60v13.80h-4.60zM747.65 423.29h4.60v4.63h-4.60zM752.20 249.07h4.60v4.64h-4.60zM752.20 423.29h4.60v4.63h-4.60zM756.75 244.48h4.60v4.64h-4.60zM756.75 423.29h4.60v13.80h-4.60zM761.30 249.07h4.60v13.80h-4.60zM765.85 423.29h4.60v13.80h-4.60zM770.40 249.07h4.60v4.64h-4.60zM774.95 249.07h4.60v13.80h-4.60zM779.50 249.07h4.60v13.80h-4.60zM784.05 249.07h4.60v4.64h-4.60zM788.60 423.29h4.60v13.80h-4.60zM793.15 249.07h4.60v13.80h-4.60zM797.70 249.07h4.60v4.64h-4.60zM797.70 423.29h4.60v4.63h-4.60zM797.70 432.46h4.60v4.63h-4.60zM802.25 249.07h4.60v4.64h-4.60zM802.25 423.29h4.60v13.80h-4.60zM806.80 249.07h4.60v4.64h-4.60zM806.80 423.29h4.60v4.63h-4.60zM811.35 249.07h4.60v4.64h-4.60zM811.35 423.29h4.60v9.22h-4.60zM815.90 249.07h4.60v13.80h-4.60zM820.45 249.07h4.60v13.80h-4.60zM825.00 249.07h4.60v13.80h-4.60zM829.55 423.29h4.60v9.22h-4.60zM834.10 249.07h4.60v4.64h-4.60zM834.10 423.29h4.60v9.22h-4.60zM838.65 249.07h4.60v9.22h-4.60zM843.20 423.29h4.60v4.63h-4.60zM847.75 249.07h4.60v4.64h-4.60zM847.75 423.29h4.60v4.63h-4.60zM852.30 249.07h4.60v4.64h-4.60zM852.30 423.29h4.60v4.63h-4.60zM856.85 423.29h4.60v13.80h-4.60zM861.40 423.29h4.60v13.80h-4.60zM865.95 249.07h4.60v4.64h-4.60zM870.50 423.29h4.60v9.22h-4.60zM875.05 249.07h4.60v4.64h-4.60zM875.05 423.29h4.60v4.63h-4.60zM879.60 423.29h4.60v13.80h-4.60zM884.15 249.07h4.60v4.64h-4.60zM884.15 423.29h4.60v4.63h-4.60zM888.70 249.07h4.60v4.64h-4.60zM888.70 258.24h4.60v4.63h-4.60zM888.70 418.71h4.60v4.63h-4.60zM897.80 249.07h4.60v13.80h-4.60zM897.80 404.95h4.60v9.22h-4.60zM902.35 249.07h4.60v4.64h-4.60zM902.35 404.95h4.60v13.80h-4.60zM906.90 404.95h4.60v9.22h-4.60zM911.45 249.07h4.60v9.22h-4.60zM911.45 400.37h4.60v4.63h-4.60zM916.00 249.07h4.60v4.64h-4.60zM920.55 249.07h4.60v13.80h-4.60zM920.55 395.78h4.60v4.63h-4.60zM925.10 400.37h4.60v4.63h-4.60zM929.65 400.37h4.60v4.63h-4.60zM934.20 249.07h4.60v4.64h-4.60zM934.20 400.37h4.60v4.63h-4.60zM938.75 359.10h4.60v4.63h-4.60zM938.75 368.27h4.60v4.63h-4.60zM938.75 377.44h4.60v4.63h-4.60zM938.75 391.20h4.60v4.63h-4.60zM938.75 400.37h4.60v4.63h-4.60zM943.30 249.07h4.60v4.64h-4.60zM943.30 359.10h4.60v41.31h-4.60zM947.85 359.10h4.60v41.31h-4.60zM952.40 249.07h4.60v4.64h-4.60zM961.50 249.07h4.60v4.64h-4.60zM966.05 400.37h4.60v4.63h-4.60zM970.60 400.37h4.60v4.63h-4.60zM975.15 249.07h4.60v4.64h-4.60zM979.70 253.65h4.60v4.63h-4.60zM979.70 262.82h4.60v22.97h-4.60zM979.70 290.33h4.60v22.97h-4.60zM979.70 317.84h4.60v13.80h-4.60zM979.70 336.18h4.60v4.63h-4.60zM979.70 345.35h4.60v4.63h-4.60zM979.70 354.52h4.60v13.80h-4.60zM979.70 372.86h4.60v4.63h-4.60zM979.70 382.03h4.60v13.80h-4.60zM984.25 267.41h4.60v9.22h-4.60zM984.25 285.74h4.60v9.22h-4.60zM984.25 304.08h4.60v4.63h-4.60zM984.25 322.42h4.60v4.63h-4.60zM984.25 340.76h4.60v4.63h-4.60zM984.25 359.10h4.60v4.63h-4.60zM984.25 377.44h4.60v4.63h-4.60zM988.80 253.65h4.60v4.63h-4.60zM988.80 262.82h4.60v4.63h-4.60zM988.80 271.99h4.60v4.63h-4.60zM988.80 281.16h4.60v4.63h-4.60zM988.80 290.33h4.60v13.80h-4.60zM988.80 308.67h4.60v4.63h-4.60zM988.80 317.84h4.60v22.97h-4.60zM988.80 345.35h4.60v4.63h-4.60zM988.80 354.52h4.60v4.63h-4.60zM988.80 363.69h4.60v4.63h-4.60zM988.80 372.86h4.60v4.63h-4.60zM988.80 382.03h4.60v18.39h-4.60z" fill="#ffff00"/>
<path d="M679.40 304.08h4.60v9.22h-4.60zM679.40 322.42h4.60v9.22h-4.60zM679.40 340.76h4.60v9.22h-4.60zM679.40 359.10h4.60v9.22h-4.60zM679.40 377.44h4.60v4.63h-4.60zM679.40 395.78h4.60v4.63h-4.60zM683.95 285.74h4.60v9.22h-4.60zM683.95 304.08h4.60v9.22h-4.60zM683.95 327.01h4.60v4.63h-4.60zM683.95 336.18h4.60v4.63h-4.60zM683.95 345.35h4.60v4.63h-4.60zM683.95 363.69h4.60v4.63h-4.60zM683.95 377.44h4.60v9.22h-4.60zM683.95 395.78h4.60v4.63h-4.60zM688.50 285.74h4.60v9.22h-4.60zM688.50 304.08h4.60v9.22h-4.60zM688.50 327.01h4.60v4.63h-4.60zM688.50 340.76h4.60v9.22h-4.60zM688.50 359.10h4.60v9.22h-4.60zM688.50 377.44h4.60v9.22h-4.60zM688.50 395.78h4.60v4.63h-4.60zM693.05 418.71h4.60v4.63h-4.60zM697.60 249.07h4.60v13.80h-4.60zM702.15 418.71h4.60v4.63h-4.60zM706.70 253.65h4.60v9.22h-4.60zM706.70 418.71h4.60v4.63h-4.60zM711.25 418.71h4.60v4.63h-4.60zM715.80 258.24h4.60v4.63h-4.60zM715.80 418.71h4.60v4.63h-4.60zM720.35 253.65h4.60v9.22h-4.60zM724.90 249.07h4.60v9.22h-4.60zM729.45 418.71h4.60v4.63h-4.60zM734.00 418.71h4.60v4.63h-4.60zM738.55 249.07h4.60v13.80h-4.60zM743.10 249.07h4.60v9.22h-4.60zM747.65 249.07h4.60v13.80h-4.60zM752.20 253.65h4.60v9.22h-4.60zM752.20 418.71h4.60v4.63h-4.60zM756.75 249.07h4.60v9.22h-4.60zM761.30 418.71h4.60v4.63h-4.60zM765.85 249.07h4.60v9.22h-4.60zM770.40 253.65h4.60v9.22h-4.60zM770.40 418.71h4.60v4.63h-4.60zM774.95 418.71h4.60v4.63h-4.60zM779.50 418.71h4.60v4.63h-4.60zM784.05 253.65h4.60v9.22h-4.60zM784.05 418.71h4.60v4.63h-4.60zM788.60 249.07h4.60v13.80h-4.60zM793.15 418.71h4.60v4.63h-4.60zM797.70 253.65h4.60v9.22h-4.60zM802.25 253.65h4.60v9.22h-4.60zM806.80 253.65h4.60v9.22h-4.60zM806.80 418.71h4.60v4.63h-4.60zM811.35 253.65h4.60v9.22h-4.60zM815.90 418.71h4.60v4.63h-4.60zM820.45 418.71h4.60v4.63h-4.60zM825.00 418.71h4.60v4.63h-4.60zM829.55 249.07h4.60v13.80h-4.60zM834.10 253.65h4.60v9.22h-4.60zM834.10 418.71h4.60v4.63h-4.60zM838.65 258.24h4.60v4.63h-4.60zM838.65 418.71h4.60v4.63h-4.60zM843.20 249.07h4.60v13.80h-4.60zM847.75 253.65h4.60v9.22h-4.60zM852.30 253.65h4.60v9.22h-4.60zM852.30 418.71h4.60v4.63h-4.60zM856.85 249.07h4.60v9.22h-4.60zM861.40 249.07h4.60v13.80h-4.60zM865.95 253.65h4.60v9.22h-4.60zM865.95 418.71h4.60v4.63h-4.60zM870.50 249.07h4.60v13.80h-4.60zM875.05 253.65h4.60v9.22h-4.60zM879.60 249.07h4.60v9.22h-4.60zM884.15 253.65h4.60v9.22h-4.60zM888.70 253.65h4.60v4.63h-4.60zM893.25 249.07h4.60v9.22h-4.60zM893.25 418.71h4.60v4.63h-4.60zM897.80 414.12h4.60v4.63h-4.60zM902.35 253.65h4.60v9.22h-4.60zM906.90 249.07h4.60v13.80h-4.60zM911.45 258.24h4.60v4.63h-4.60zM911.45 391.20h4.60v9.22h-4.60zM916.00 253.65h4.60v9.22h-4.60zM916.00 391.20h4.60v9.22h-4.60zM920.55 391.20h4.60v4.63h-4.60zM925.10 249.07h4.60v13.80h-4.60zM925.10 391.20h4.60v9.22h-4.60zM929.65 249.07h4.60v13.80h-4.60zM929.65 395.78h4.60v4.63h-4.60zM934.20 253.65h4.60v9.22h-4.60zM934.20 395.78h4.60v4.63h-4.60zM938.75 249.07h4.60v9.22h-4.60zM938.75 363.69h4.60v4.63h-4.60zM938.75 372.86h4.60v4.63h-4.60zM938.75 382.03h4.60v9.22h-4.60zM938.75 395.78h4.60v4.63h-4.60zM943.30 253.65h4.60v9.22h-4.60zM947.85 249.07h4.60v13.80h-4.60zM952.40 253.65h4.60v9.22h-4.60zM956.95 249.07h4.60v13.80h-4.60zM961.50 253.65h4.60v9.22h-4.60zM961.50 386.61h4.60v13.80h-4.60zM966.05 249.07h4.60v13.80h-4.60zM966.05 391.20h4.60v9.22h-4.60zM970.60 249.07h4.60v4.64h-4.60zM975.15 253.65h4.60v9.22h-4.60zM975.15 386.61h4.60v13.80h-4.60zM979.70 285.74h4.60v4.63h-4.60zM979.70 340.76h4.60v4.63h-4.60zM979.70 377.44h4.60v4.63h-4.60zM988.80 267.41h4.60v4.63h-4.60zM988.80 285.74h4.60v4.63h-4.60zM988.80 304.08h4.60v4.63h-4.60zM988.80 340.76h4.60v4.63h-4.60zM988.80 359.10h4.60v4.63h-4.60zM988.80 377.44h4.60v4.63h-4.60z" fill="#ffc800"/>
<path d="M683.95 322.42h4.60v4.63h-4.60zM683.95 340.76h4.60v4.63h-4.60zM683.95 359.10h4.60v4.63h-4.60zM688.50 322.42h4.60v4.63h-4.60zM693.05 262.82h4.60v4.63h-4.60zM697.60 418.71h4.60v4.63h-4.60zM702.15 262.82h4.60v4.63h-4.60zM706.70 262.82h4.60v4.63h-4.60zM711.25 262.82h4.60v4.63h-4.60zM715.80 262.82h4.60v4.63h-4.60zM720.35 418.71h4.60v4.63h-4.60zM724.90 258.24h4.60v4.63h-4.60zM724.90 418.71h4.60v4.63h-4.60zM729.45 262.82h4.60v4.63h-4.60zM734.00 262.82h4.60v4.63h-4.60zM738.55 418.71h4.60v4.63h-4.60zM743.10 258.24h4.60v4.63h-4.60zM743.10 418.71h4.60v4.63h-4.60zM747.65 418.71h4.60v4.63h-4.60zM756.75 258.24h4.60v4.63h-4.60zM756.75 418.71h4.60v4.63h-4.60zM761.30 262.82h4.60v4.63h-4.60zM765.85 258.24h4.60v4.63h-4.60zM765.85 418.71h4.60v4.63h-4.60zM770.40 262.82h4.60v4.63h-4.60zM774.95 262.82h4.60v4.63h-4.60zM779.50 262.82h4.60v4.63h-4.60zM784.05 262.82h4.60v4.63h-4.60zM788.60 418.71h4.60v4.63h-4.60zM793.15 262.82h4.60v4.63h-4.60zM797.70 418.71h4.60v4.63h-4.60zM802.25 418.71h4.60v4.63h-4.60zM806.80 262.82h4.60v4.63h-4.60zM811.35 418.71h4.60v4.63h-4.60zM815.90 262.82h4.60v4.63h-4.60zM820.45 262.82h4.60v4.63h-4.60zM825.00 262.82h4.60v4.63h-4.60zM829.55 418.71h4.60v4.63h-4.60zM834.10 262.82h4.60v4.63h-4.60zM838.65 262.82h4.60v4.63h-4.60zM843.20 418.71h4.60v4.63h-4.60zM847.75 262.82h4.60v4.63h-4.60zM847.75 418.71h4.60v4.63h-4.60zM852.30 262.82h4.60v4.63h-4.60zM856.85 258.24h4.60v4.63h-4.60zM856.85 418.71h4.60v4.63h-4.60zM861.40 418.71h4.60v4.63h-4.60zM865.95 262.82h4.60v4.63h-4.60zM870.50 418.71h4.60v4.63h-4.60zM875.05 418.71h4.60v4.63h-4.60zM879.60 258.24h4.60v4.63h-4.60zM879.60 418.71h4.60v4.63h-4.60zM884.15 418.71h4.60v4.63h-4.60zM888.70 262.82h4.60v4.63h-4.60zM888.70 409.54h4.60v9.22h-4.60zM893.25 258.24h4.60v4.63h-4.60zM893.25 414.12h4.60v4.63h-4.60zM897.80 262.82h4.60v4.63h-4.60zM902.35 400.37h4.60v4.63h-4.60zM906.90 400.37h4.60v4.63h-4.60zM911.45 262.82h4.60v4.63h-4.60zM911.45 386.61h4.60v4.63h-4.60zM916.00 386.61h4.60v4.63h-4.60zM920.55 262.82h4.60v4.63h-4.60zM920.55 386.61h4.60v4.63h-4.60zM929.65 391.20h4.60v4.63h-4.60zM934.20 391.20h4.60v4.63h-4.60zM938.75 258.24h4.60v4.63h-4.60zM943.30 262.82h4.60v4.63h-4.60zM966.05 386.61h4.60v4.63h-4.60zM970.60 253.65h4.60v9.22h-4.60zM970.60 386.61h4.60v13.80h-4.60z" fill="#ff9c00"/>
<path d="M693.05 276.57h4.60v4.63h-4.60zM693.05 395.78h4.60v4.63h-4.60zM693.05 404.95h4.60v13.80h-4.60zM697.60 262.82h4.60v9.22h-4.60zM697.60 290.33h4.60v4.63h-4.60zM697.60 354.52h4.60v4.63h-4.60zM697.60 414.12h4.60v4.63h-4.60zM702.15 276.57h4.60v4.63h-4.60zM702.15 322.42h4.60v4.63h-4.60zM702.15 345.35h4.60v4.63h-4.60zM702.15 404.95h4.60v13.80h-4.60zM706.70 271.99h4.60v4.63h-4.60zM706.70 336.18h4.60v4.63h-4.60zM706.70 359.10h4.60v4.63h-4.60zM706.70 377.44h4.60v4.63h-4.60zM706.70 409.54h4.60v9.22h-4.60zM711.25 276.57h4.60v4.63h-4.60zM711.25 322.42h4.60v4.63h-4.60zM711.25 404.95h4.60v13.80h-4.60zM715.80 290.33h4.60v4.63h-4.60zM715.80 400.37h4.60v18.39h-4.60zM720.35 262.82h4.60v4.63h-4.60zM720.35 409.54h4.60v9.22h-4.60zM724.90 262.82h4.60v4.63h-4.60zM724.90 322.42h4.60v4.63h-4.60zM724.90 359.10h4.60v4.63h-4.60zM729.45 404.95h4.60v13.80h-4.60zM734.00 354.52h4.60v4.63h-4.60zM734.00 400.37h4.60v18.39h-4.60zM738.55 262.82h4.60v4.63h-4.60zM738.55 359.10h4.60v4.63h-4.60zM743.10 262.82h4.60v4.63h-4.60zM743.10 285.74h4.60v4.63h-4.60zM743.10 336.18h4.60v4.63h-4.60zM743.10 395.78h4.60v4.63h-4.60zM747.65 262.82h4.60v4.63h-4.60zM747.65 281.16h4.60v4.63h-4.60zM752.20 262.82h4.60v4.63h-4.60zM752.20 409.54h4.60v9.22h-4.60zM756.75 262.82h4.60v4.63h-4.60zM756.75 271.99h4.60v4.63h-4.60zM756.75 340.76h4.60v4.63h-4.60zM761.30 276.57h4.60v4.63h-4.60zM761.30 304.08h4.60v4.63h-4.60zM761.30 404.95h4.60v13.80h-4.60zM765.85 262.82h4.60v4.63h-4.60zM765.85 395.78h4.60v4.63h-4.60zM770.40 404.95h4.60v13.80h-4.60zM774.95 290.33h4.60v4.63h-4.60zM774.95 391.20h4.60v4.63h-4.60zM774.95 404.95h4.60v13.80h-4.60zM779.50 404.95h4.60v13.80h-4.60zM784.05 345.35h4.60v4.63h-4.60zM784.05 372.86h4.60v4.63h-4.60zM784.05 404.95h4.60v13.80h-4.60zM788.60 262.82h4.60v4.63h-4.60zM788.60 345.35h4.60v4.63h-4.60zM793.15 404.95h4.60v13.80h-4.60zM797.70 262.82h4.60v4.63h-4.60zM797.70 414.12h4.60v4.63h-4.60zM802.25 262.82h4.60v4.63h-4.60zM802.25 345.35h4.60v4.63h-4.60zM806.80 414.12h4.60v4.63h-4.60zM811.35 262.82h4.60v4.63h-4.60zM811.35 395.78h4.60v4.63h-4.60zM815.90 322.42h4.60v4.63h-4.60zM815.90 404.95h4.60v13.80h-4.60zM820.45 317.84h4.60v4.63h-4.60zM820.45 345.35h4.60v4.63h-4.60zM820.45 404.95h4.60v13.80h-4.60zM825.00 368.27h4.60v4.63h-4.60zM825.00 395.78h4.60v4.63h-4.60zM825.00 404.95h4.60v13.80h-4.60zM829.55 262.82h4.60v4.63h-4.60zM829.55 276.57h4.60v4.63h-4.60zM829.55 290.33h4.60v4.63h-4.60zM829.55 345.35h4.60v4.63h-4.60zM829.55 359.10h4.60v4.63h-4.60zM834.10 271.99h4.60v4.63h-4.60zM834.10 377.44h4.60v4.63h-4.60zM834.10 409.54h4.60v9.22h-4.60zM838.65 290.33h4.60v4.63h-4.60zM838.65 409.54h4.60v9.22h-4.60zM843.20 262.82h4.60v4.63h-4.60zM847.75 409.54h4.60v9.22h-4.60zM852.30 409.54h4.60v9.22h-4.60zM856.85 262.82h4.60v4.63h-4.60zM856.85 308.67h4.60v4.63h-4.60zM856.85 331.59h4.60v4.63h-4.60zM861.40 262.82h4.60v4.63h-4.60zM861.40 363.69h4.60v4.63h-4.60zM865.95 409.54h4.60v9.22h-4.60zM870.50 262.82h4.60v4.63h-4.60zM870.50 317.84h4.60v4.63h-4.60zM870.50 414.12h4.60v4.63h-4.60zM875.05 262.82h4.60v4.63h-4.60zM875.05 271.99h4.60v4.63h-4.60zM875.05 294.91h4.60v4.63h-4.60zM875.05 331.59h4.60v4.63h-4.60zM875.05 414.12h4.60v4.63h-4.60zM879.60 262.82h4.60v4.63h-4.60zM879.60 313.25h4.60v4.63h-4.60zM879.60 372.86h4.60v4.63h-4.60zM884.15 262.82h4.60v4.63h-4.60zM884.15 363.69h4.60v4.63h-4.60zM888.70 404.95h4.60v4.63h-4.60zM893.25 262.82h4.60v4.63h-4.60zM893.25 322.42h4.60v4.63h-4.60zM893.25 345.35h4.60v4.63h-4.60zM893.25 377.44h4.60v4.63h-4.60zM893.25 404.95h4.60v9.22h-4.60zM897.80 322.42h4.60v4.63h-4.60zM897.80 336.18h4.60v4.63h-4.60zM897.80 386.61h4.60v18.39h-4.60zM902.35 262.82h4.60v4.63h-4.60zM902.35 386.61h4.60v13.80h-4.60zM906.90 262.82h4.60v4.63h-4.60zM906.90 271.99h4.60v4.63h-4.60zM906.90 340.76h4.60v4.63h-4.60zM906.90 386.61h4.60v13.80h-4.60zM911.45 285.74h4.60v4.63h-4.60zM916.00 262.82h4.60v4.63h-4.60zM916.00 294.91h4.60v4.63h-4.60zM916.00 327.01h4.60v4.63h-4.60zM916.00 363.69h4.60v4.63h-4.60zM920.55 327.01h4.60v4.63h-4.60zM925.10 262.82h4.60v4.63h-4.60zM925.10 368.27h4.60v4.63h-4.60zM925.10 386.61h4.60v4.63h-4.60zM929.65 262.82h4.60v4.63h-4.60zM929.65 308.67h4.60v4.63h-4.60zM929.65 386.61h4.60v4.63h-4.60zM934.20 262.82h4.60v4.63h-4.60zM934.20 386.61h4.60v4.63h-4.60zM938.75 262.82h4.60v4.63h-4.60zM938.75 290.33h4.60v9.22h-4.60zM947.85 262.82h4.60v4.63h-4.60zM947.85 271.99h4.60v4.63h-4.60zM952.40 262.82h4.60v4.63h-4.60zM952.40 349.93h4.60v4.63h-4.60zM956.95 262.82h4.60v4.63h-4.60zM956.95 322.42h4.60v4.63h-4.60zM956.95 349.93h4.60v4.63h-4.60zM961.50 262.82h4.60v4.63h-4.60zM966.05 262.82h4.60v4.63h-4.60zM966.05 327.01h4.60v4.63h-4.60zM970.60 262.82h4.60v4.63h-4.60zM975.15 262.82h4.60v4.63h-4.60zM975.15 285.74h4.60v4.63h-4.60zM975.15 377.44h4.60v4.63h-4.60z" fill="#ff7000"/>
<path d="M693.05 267.41h4.60v4.63h-4.60zM693.05 281.16h4.60v9.22h-4.60zM693.05 294.91h4.60v4.63h-4.60zM693.05 308.67h4.60v9.22h-4.60zM693.05 336.18h4.60v4.63h-4.60zM693.05 359.10h4.60v4.63h-4.60zM693.05 368.27h4.60v4.63h-4.60zM693.05 382.03h4.60v13.80h-4.60zM697.60 271.99h4.60v18.39h-4.60zM697.60 304.08h4.60v4.63h-4.60zM697.60 313.25h4.60v4.63h-4.60zM697.60 322.42h4.60v4.63h-4.60zM697.60 331.59h4.60v4.63h-4.60zM697.60 363.69h4.60v18.39h-4.60zM697.60 404.95h4.60v9.22h-4.60zM702.15 267.41h4.60v9.22h-4.60zM702.15 281.16h4.60v4.63h-4.60zM702.15 290.33h4.60v9.22h-4.60zM702.15 313.25h4.60v9.22h-4.60zM702.15 336.18h4.60v4.63h-4.60zM702.15 354.52h4.60v4.63h-4.60zM702.15 368.27h4.60v4.63h-4.60zM702.15 382.03h4.60v13.80h-4.60zM706.70 267.41h4.60v4.63h-4.60zM706.70 276.57h4.60v9.22h-4.60zM706.70 290.33h4.60v4.63h-4.60zM706.70 299.50h4.60v4.63h-4.60zM706.70 308.67h4.60v4.63h-4.60zM706.70 317.84h4.60v4.63h-4.60zM706.70 327.01h4.60v4.63h-4.60zM706.70 340.76h4.60v4.63h-4.60zM706.70 363.69h4.60v4.63h-4.60zM706.70 391.20h4.60v4.63h-4.60zM706.70 404.95h4.60v4.63h-4.60zM711.25 267.41h4.60v4.63h-4.60zM711.25 281.16h4.60v9.22h-4.60zM711.25 294.91h4.60v9.22h-4.60zM711.25 313.25h4.60v4.63h-4.60zM711.25 327.01h4.60v4.63h-4.60zM711.25 336.18h4.60v4.63h-4.60zM711.25 359.10h4.60v4.63h-4.60zM711.25 368.27h4.60v9.22h-4.60zM711.25 386.61h4.60v9.22h-4.60zM715.80 267.41h4.60v4.63h-4.60zM715.80 276.57h4.60v13.80h-4.60zM715.80 294.91h4.60v4.63h-4.60zM715.80 313.25h4.60v4.63h-4.60zM715.80 327.01h4.60v4.63h-4.60zM715.80 336.18h4.60v4.63h-4.60zM715.80 345.35h4.60v9.22h-4.60zM715.80 359.10h4.60v4.63h-4.60zM715.80 368.27h4.60v9.22h-4.60zM715.80 386.61h4.60v4.63h-4.60zM720.35 267.41h4.60v4.63h-4.60zM720.35 276.57h4.60v9.22h-4.60zM720.35 294.91h4.60v9.22h-4.60zM720.35 308.67h4.60v4.63h-4.60zM720.35 322.42h4.60v4.63h-4.60zM720.35 336.18h4.60v9.22h-4.60zM720.35 372.86h4.60v4.63h-4.60zM720.35 382.03h4.60v9.22h-4.60zM720.35 400.37h4.60v9.22h-4.60zM724.90 267.41h4.60v4.63h-4.60zM724.90 276.57h4.60v4.63h-4.60zM724.90 285.74h4.60v4.63h-4.60zM724.90 331.59h4.60v4.63h-4.60zM724.90 345.35h4.60v13.80h-4.60zM724.90 368.27h4.60v9.22h-4.60zM724.90 386.61h4.60v9.22h-4.60zM724.90 404.95h4.60v13.80h-4.60zM729.45 267.41h4.60v18.39h-4.60zM729.45 290.33h4.60v9.22h-4.60zM729.45 304.08h4.60v4.63h-4.60zM729.45 313.25h4.60v4.63h-4.60zM729.45 322.42h4.60v4.63h-4.60zM729.45 336.18h4.60v9.22h-4.60zM729.45 368.27h4.60v4.63h-4.60zM729.45 377.44h4.60v13.80h-4.60zM734.00 267.41h4.60v4.63h-4.60zM734.00 276.57h4.60v9.22h-4.60zM734.00 294.91h4.60v4.63h-4.60zM734.00 304.08h4.60v9.22h-4.60zM734.00 327.01h4.60v4.63h-4.60zM734.00 340.76h4.60v9.22h-4.60zM734.00 363.69h4.60v4.63h-4.60zM734.00 386.61h4.60v13.80h-4.60zM738.55 267.41h4.60v4.63h-4.60zM738.55 322.42h4.60v4.63h-4.60zM738.55 336.18h4.60v4.63h-4.60zM738.55 345.35h4.60v9.22h-4.60zM738.55 382.03h4.60v9.22h-4.60zM738.55 404.95h4.60v13.80h-4.60zM743.10 340.76h4.60v4.63h-4.60zM743.10 359.10h4.60v4.63h-4.60zM743.10 377.44h4.60v4.63h-4.60zM743.10 409.54h4.60v9.22h-4.60zM747.65 267.41h4.60v4.63h-4.60zM747.65 276.57h4.60v4.63h-4.60zM747.65 285.74h4.60v9.22h-4.60zM747.65 299.50h4.60v4.63h-4.60zM747.65 340.76h4.60v18.39h-4.60zM747.65 386.61h4.60v4.63h-4.60zM747.65 404.95h4.60v13.80h-4.60zM752.20 267.41h4.60v13.80h-4.60zM752.20 299.50h4.60v4.63h-4.60zM752.20 327.01h4.60v4.63h-4.60zM752.20 336.18h4.60v9.22h-4.60zM752.20 359.10h4.60v4.63h-4.60zM752.20 382.03h4.60v4.63h-4.60zM752.20 404.95h4.60v4.63h-4.60zM756.75 276.57h4.60v4.63h-4.60zM756.75 285.74h4.60v4.63h-4.60zM756.75 299.50h4.60v4.63h-4.60zM756.75 336.18h4.60v4.63h-4.60zM756.75 377.44h4.60v9.22h-4.60zM756.75 404.95h4.60v4.63h-4.60zM756.75 414.12h4.60v4.63h-4.60zM761.30 267.41h4.60v9.22h-4.60zM761.30 281.16h4.60v4.63h-4.60zM761.30 294.91h4.60v9.22h-4.60zM761.30 308.67h4.60v4.63h-4.60zM761.30 327.01h4.60v4.63h-4.60zM761.30 354.52h4.60v18.39h-4.60zM761.30 382.03h4.60v18.39h-4.60zM765.85 267.41h4.60v4.63h-4.60zM765.85 276.57h4.60v4.63h-4.60zM765.85 290.33h4.60v9.22h-4.60zM765.85 304.08h4.60v9.22h-4.60zM765.85 331.59h4.60v4.63h-4.60zM765.85 340.76h4.60v13.80h-4.60zM765.85 359.10h4.60v4.63h-4.60zM765.85 368.27h4.60v9.22h-4.60zM765.85 386.61h4.60v4.63h-4.60zM765.85 400.37h4.60v18.39h-4.60zM770.40 267.41h4.60v4.63h-4.60zM770.40 276.57h4.60v9.22h-4.60zM770.40 294.91h4.60v4.63h-4.60zM770.40 308.67h4.60v4.63h-4.60zM770.40 317.84h4.60v4.63h-4.60zM770.40 327.01h4.60v4.63h-4.60zM770.40 377.44h4.60v22.97h-4.60zM774.95 267.41h4.60v4.63h-4.60zM774.95 276.57h4.60v9.22h-4.60zM774.95 322.42h4.60v4.63h-4.60zM774.95 331.59h4.60v4.63h-4.60zM774.95 349.93h4.60v13.80h-4.60zM774.95 368.27h4.60v4.63h-4.60zM774.95 377.44h4.60v4.63h-4.60zM774.95 386.61h4.60v4.63h-4.60zM774.95 395.78h4.60v4.63h-4.60zM779.50 267.41h4.60v4.63h-4.60zM779.50 276.57h4.60v9.22h-4.60zM779.50 290.33h4.60v13.80h-4.60zM779.50 308.67h4.60v9.22h-4.60zM779.50 354.52h4.60v9.22h-4.60zM779.50 368.27h4.60v4.63h-4.60zM779.50 386.61h4.60v4.63h-4.60zM779.50 395.78h4.60v4.63h-4.60zM784.05 267.41h4.60v4.63h-4.60zM784.05 276.57h4.60v4.63h-4.60zM784.05 336.18h4.60v4.63h-4.60zM784.05 354.52h4.60v4.63h-4.60zM784.05 363.69h4.60v4.63h-4.60zM784.05 377.44h4.60v4.63h-4.60zM784.05 386.61h4.60v9.22h-4.60zM788.60 276.57h4.60v4.63h-4.60zM788.60 290.33h4.60v4.63h-4.60zM788.60 317.84h4.60v4.63h-4.60zM788.60 336.18h4.60v4.63h-4.60zM788.60 363.69h4.60v4.63h-4.60zM788.60 372.86h4.60v9.22h-4.60zM788.60 386.61h4.60v9.22h-4.60zM788.60 409.54h4.60v9.22h-4.60zM793.15 267.41h4.60v4.63h-4.60zM793.15 276.57h4.60v9.22h-4.60zM793.15 290.33h4.60v9.22h-4.60zM793.15 304.08h4.60v9.22h-4.60zM793.15 331.59h4.60v4.63h-4.60zM793.15 349.93h4.60v4.63h-4.60zM793.15 359.10h4.60v4.63h-4.60zM793.15 372.86h4.60v9.22h-4.60zM793.15 386.61h4.60v4.63h-4.60zM797.70 276.57h4.60v4.63h-4.60zM797.70 290.33h4.60v9.22h-4.60zM797.70 313.25h4.60v4.63h-4.60zM797.70 322.42h4.60v9.22h-4.60zM797.70 336.18h4.60v4.63h-4.60zM797.70 382.03h4.60v13.80h-4.60zM797.70 400.37h4.60v13.80h-4.60zM802.25 267.41h4.60v4.63h-4.60zM802.25 290.33h4.60v4.63h-4.60zM802.25 308.67h4.60v4.63h-4.60zM802.25 331.59h4.60v13.80h-4.60zM802.25 349.93h4.60v13.80h-4.60zM802.25 391.20h4.60v4.63h-4.60zM802.25 404.95h4.60v13.80h-4.60zM806.80 267.41h4.60v4.63h-4.60zM806.80 276.57h4.60v4.63h-4.60zM806.80 285.74h4.60v4.63h-4.60zM806.80 299.50h4.60v9.22h-4.60zM806.80 322.42h4.60v9.22h-4.60zM806.80 340.76h4.60v4.63h-4.60zM806.80 354.52h4.60v4.63h-4.60zM806.80 363.69h4.60v9.22h-4.60zM806.80 382.03h4.60v4.63h-4.60zM806.80 404.95h4.60v9.22h-4.60zM811.35 276.57h4.60v4.63h-4.60zM811.35 308.67h4.60v4.63h-4.60zM811.35 331.59h4.60v9.22h-4.60zM811.35 345.35h4.60v4.63h-4.60zM811.35 359.10h4.60v4.63h-4.60zM811.35 372.86h4.60v4.63h-4.60zM811.35 382.03h4.60v9.22h-4.60zM811.35 404.95h4.60v13.80h-4.60zM815.90 267.41h4.60v18.39h-4.60zM815.90 290.33h4.60v9.22h-4.60zM815.90 317.84h4.60v4.63h-4.60zM815.90 340.76h4.60v13.80h-4.60zM815.90 386.61h4.60v9.22h-4.60zM820.45 267.41h4.60v18.39h-4.60zM820.45 294.91h4.60v4.63h-4.60zM820.45 313.25h4.60v4.63h-4.60zM820.45 322.42h4.60v4.63h-4.60zM820.45 331.59h4.60v4.63h-4.60zM820.45 354.52h4.60v9.22h-4.60zM820.45 368.27h4.60v4.63h-4.60zM820.45 377.44h4.60v4.63h-4.60zM820.45 386.61h4.60v13.80h-4.60zM825.00 267.41h4.60v18.39h-4.60zM825.00 294.91h4.60v9.22h-4.60zM825.00 313.25h4.60v4.63h-4.60zM825.00 331.59h4.60v22.97h-4.60zM825.00 372.86h4.60v4.63h-4.60zM825.00 386.61h4.60v9.22h-4.60zM829.55 299.50h4.60v9.22h-4.60zM829.55 317.84h4.60v9.22h-4.60zM829.55 331.59h4.60v4.63h-4.60zM829.55 404.95h4.60v13.80h-4.60zM834.10 267.41h4.60v4.63h-4.60zM834.10 276.57h4.60v4.63h-4.60zM834.10 308.67h4.60v9.22h-4.60zM834.10 336.18h4.60v4.63h-4.60zM834.10 404.95h4.60v4.63h-4.60zM838.65 267.41h4.60v4.63h-4.60zM838.65 276.57h4.60v9.22h-4.60zM838.65 304.08h4.60v9.22h-4.60zM838.65 327.01h4.60v4.63h-4.60zM838.65 340.76h4.60v4.63h-4.60zM838.65 368.27h4.60v4.63h-4.60zM838.65 382.03h4.60v9.22h-4.60zM838.65 404.95h4.60v4.63h-4.60zM843.20 271.99h4.60v13.80h-4.60zM843.20 317.84h4.60v9.22h-4.60zM843.20 349.93h4.60v4.63h-4.60zM843.20 372.86h4.60v9.22h-4.60zM843.20 404.95h4.60v13.80h-4.60zM847.75 271.99h4.60v13.80h-4.60zM847.75 308.67h4.60v4.63h-4.60zM847.75 340.76h4.60v4.63h-4.60zM847.75 349.93h4.60v13.80h-4.60zM847.75 368.27h4.60v4.63h-4.60zM847.75 377.44h4.60v4.63h-4.60zM847.75 395.78h4.60v4.63h-4.60zM847.75 404.95h4.60v4.63h-4.60zM852.30 267.41h4.60v4.63h-4.60zM852.30 276.57h4.60v4.63h-4.60zM852.30 304.08h4.60v4.63h-4.60zM852.30 313.25h4.60v4.63h-4.60zM852.30 327.01h4.60v9.22h-4.60zM852.30 359.10h4.60v4.63h-4.60zM852.30 382.03h4.60v4.63h-4.60zM852.30 395.78h4.60v4.63h-4.60zM852.30 404.95h4.60v4.63h-4.60zM856.85 267.41h4.60v4.63h-4.60zM856.85 354.52h4.60v9.22h-4.60zM856.85 372.86h4.60v4.63h-4.60zM856.85 382.03h4.60v9.22h-4.60zM856.85 404.95h4.60v13.80h-4.60zM861.40 267.41h4.60v4.63h-4.60zM861.40 276.57h4.60v4.63h-4.60zM861.40 294.91h4.60v4.63h-4.60zM861.40 308.67h4.60v4.63h-4.60zM861.40 317.84h4.60v13.80h-4.60zM861.40 340.76h4.60v4.63h-4.60zM861.40 404.95h4.60v13.80h-4.60zM865.95 267.41h4.60v4.63h-4.60zM865.95 276.57h4.60v13.80h-4.60zM865.95 308.67h4.60v13.80h-4.60zM865.95 327.01h4.60v9.22h-4.60zM865.95 345.35h4.60v9.22h-4.60zM865.95 359.10h4.60v9.22h-4.60zM865.95 386.61h4.60v4.63h-4.60zM865.95 404.95h4.60v4.63h-4.60zM870.50 267.41h4.60v4.63h-4.60zM870.50 294.91h4.60v4.63h-4.60zM870.50 308.67h4.60v4.63h-4.60zM870.50 331.59h4.60v4.63h-4.60zM870.50 340.76h4.60v4.63h-4.60zM870.50 368.27h4.60v4.63h-4.60zM870.50 377.44h4.60v4.63h-4.60zM870.50 386.61h4.60v4.63h-4.60zM870.50 404.95h4.60v9.22h-4.60zM875.05 267.41h4.60v4.63h-4.60zM875.05 276.57h4.60v4.63h-4.60zM875.05 290.33h4.60v4.63h-4.60zM875.05 299.50h4.60v13.80h-4.60zM875.05 322.42h4.60v4.63h-4.60zM875.05 336.18h4.60v13.80h-4.60zM875.05 354.52h4.60v4.63h-4.60zM875.05 372.86h4.60v4.63h-4.60zM875.05 404.95h4.60v9.22h-4.60zM879.60 290.33h4.60v4.63h-4.60zM879.60 299.50h4.60v4.63h-4.60zM879.60 308.67h4.60v4.63h-4.60zM879.60 331.59h4.60v9.22h-4.60zM879.60 359.10h4.60v4.63h-4.60zM879.60 395.78h4.60v22.97h-4.60zM884.15 281.16h4.60v4.63h-4.60zM884.15 294.91h4.60v4.63h-4.60zM884.15 304.08h4.60v9.22h-4.60zM884.15 317.84h4.60v13.80h-4.60zM884.15 336.18h4.60v9.22h-4.60zM884.15 354.52h4.60v4.63h-4.60zM884.15 382.03h4.60v4.63h-4.60zM884.15 395.78h4.60v22.97h-4.60zM888.70 267.41h4.60v4.63h-4.60zM888.70 276.57h4.60v9.22h-4.60zM888.70 290.33h4.60v13.80h-4.60zM888.70 308.67h4.60v4.63h-4.60zM888.70 322.42h4.60v4.63h-4.60zM888.70 331.59h4.60v4.63h-4.60zM888.70 372.86h4.60v4.63h-4.60zM888.70 382.03h4.60v22.97h-4.60zM893.25 267.41h4.60v9.22h-4.60zM893.25 281.16h4.60v13.80h-4.60zM893.25 304.08h4.60v4.63h-4.60zM893.25 331.59h4.60v13.80h-4.60zM893.25 363.69h4.60v4.63h-4.60zM893.25 382.03h4.60v4.63h-4.60zM893.25 395.78h4.60v9.22h-4.60zM897.80 267.41h4.60v18.39h-4.60zM897.80 290.33h4.60v9.22h-4.60zM897.80 308.67h4.60v13.80h-4.60zM897.80 345.35h4.60v4.63h-4.60zM897.80 359.10h4.60v4.63h-4.60zM897.80 368.27h4.60v18.39h-4.60zM902.35 267.41h4.60v22.97h-4.60zM902.35 294.91h4.60v4.63h-4.60zM902.35 304.08h4.60v4.63h-4.60zM902.35 317.84h4.60v4.63h-4.60zM902.35 327.01h4.60v9.22h-4.60zM902.35 345.35h4.60v4.63h-4.60zM902.35 354.52h4.60v4.63h-4.60zM902.35 377.44h4.60v9.22h-4.60zM906.90 267.41h4.60v4.63h-4.60zM906.90 276.57h4.60v4.63h-4.60zM906.90 285.74h4.60v4.63h-4.60zM906.90 294.91h4.60v13.80h-4.60zM906.90 313.25h4.60v9.22h-4.60zM906.90 327.01h4.60v4.63h-4.60zM906.90 336.18h4.60v4.63h-4.60zM906.90 345.35h4.60v4.63h-4.60zM906.90 372.86h4.60v9.22h-4.60zM911.45 267.41h4.60v4.63h-4.60zM911.45 276.57h4.60v9.22h-4.60zM911.45 294.91h4.60v4.63h-4.60zM911.45 304.08h4.60v4.63h-4.60zM911.45 322.42h4.60v4.63h-4.60zM911.45 359.10h4.60v27.56h-4.60zM916.00 276.57h4.60v4.63h-4.60zM916.00 290.33h4.60v4.63h-4.60zM916.00 336.18h4.60v4.63h-4.60zM916.00 354.52h4.60v4.63h-4.60zM916.00 372.86h4.60v4.63h-4.60zM920.55 267.41h4.60v18.39h-4.60zM920.55 290.33h4.60v9.22h-4.60zM920.55 304.08h4.60v13.80h-4.60zM920.55 336.18h4.60v18.39h-4.60zM920.55 368.27h4.60v9.22h-4.60zM920.55 382.03h4.60v4.63h-4.60zM925.10 285.74h4.60v4.63h-4.60zM925.10 299.50h4.60v4.63h-4.60zM925.10 313.25h4.60v4.63h-4.60zM925.10 322.42h4.60v9.22h-4.60zM925.10 349.93h4.60v4.63h-4.60zM925.10 359.10h4.60v4.63h-4.60zM925.10 372.86h4.60v9.22h-4.60zM929.65 276.57h4.60v4.63h-4.60zM929.65 322.42h4.60v4.63h-4.60zM929.65 354.52h4.60v9.22h-4.60zM929.65 382.03h4.60v4.63h-4.60zM934.20 267.41h4.60v4.63h-4.60zM934.20 276.57h4.60v4.63h-4.60zM934.20 299.50h4.60v4.63h-4.60zM934.20 317.84h4.60v9.22h-4.60zM934.20 331.59h4.60v4.63h-4.60zM934.20 340.76h4.60v9.22h-4.60zM934.20 377.44h4.60v4.63h-4.60zM938.75 299.50h4.60v13.80h-4.60zM938.75 327.01h4.60v4.63h-4.60zM938.75 340.76h4.60v4.63h-4.60zM938.75 354.52h4.60v4.63h-4.60zM943.30 267.41h4.60v4.63h-4.60zM943.30 276.57h4.60v9.22h-4.60zM943.30 299.50h4.60v4.63h-4.60zM943.30 327.01h4.60v13.80h-4.60zM943.30 349.93h4.60v4.63h-4.60zM947.85 267.41h4.60v4.63h-4.60zM947.85 276.57h4.60v4.63h-4.60zM947.85 317.84h4.60v4.63h-4.60zM947.85 345.35h4.60v4.63h-4.60zM947.85 354.52h4.60v4.63h-4.60zM952.40 276.57h4.60v4.63h-4.60zM952.40 317.84h4.60v4.63h-4.60zM952.40 336.18h4.60v9.22h-4.60zM952.40 354.52h4.60v9.22h-4.60zM956.95 267.41h4.60v4.63h-4.60zM956.95 276.57h4.60v4.63h-4.60zM956.95 285.74h4.60v4.63h-4.60zM956.95 294.91h4.60v4.63h-4.60zM956.95 308.67h4.60v4.63h-4.60zM956.95 336.18h4.60v4.63h-4.60zM956.95 372.86h4.60v4.63h-4.60zM961.50 276.57h4.60v4.63h-4.60zM961.50 285.74h4.60v4.63h-4.60zM961.50 313.25h4.60v4.63h-4.60zM961.50 327.01h4.60v4.63h-4.60zM961.50 336.18h4.60v13.80h-4.60zM961.50 354.52h4.60v4.63h-4.60zM961.50 377.44h4.60v4.63h-4.60zM966.05 267.41h4.60v9.22h-4.60zM966.05 290.33h4.60v4.63h-4.60zM966.05 299.50h4.60v4.63h-4.60zM966.05 313.25h4.60v4.63h-4.60zM966.05 336.18h4.60v4.63h-4.60zM966.05 345.35h4.60v4.63h-4.60zM966.05 368.27h4.60v4.63h-4.60zM966.05 382.03h4.60v4.63h-4.60zM970.60 267.41h4.60v4.63h-4.60zM970.60 276.57h4.60v4.63h-4.60zM970.60 285.74h4.60v4.63h-4.60zM970.60 313.25h4.60v4.63h-4.60zM970.60 322.42h4.60v4.63h-4.60zM970.60 331.59h4.60v4.63h-4.60zM970.60 349.93h4.60v4.63h-4.60zM970.60 363.69h4.60v18.39h-4.60zM975.15 276.57h4.60v4.63h-4.60zM975.15 299.50h4.60v4.63h-4.60zM975.15 308.67h4.60v4.63h-4.60zM975.15 317.84h4.60v4.63h-4.60zM975.15 345.35h4.60v13.80h-4.60z" fill="#ff4c00"/>
<path d="M693.05 271.99h4.60v4.63h-4.60zM693.05 290.33h4.60v4.63h-4.60zM693.05 299.50h4.60v9.22h-4.60zM693.05 317.84h4.60v18.39h-4.60zM693.05 340.76h4.60v18.39h-4.60zM693.05 363.69h4.60v4.63h-4.60zM693.05 372.86h4.60v9.22h-4.60zM693.05 400.37h4.60v4.63h-4.60zM697.60 294.91h4.60v9.22h-4.60zM697.60 308.67h4.60v4.63h-4.60zM697.60 317.84h4.60v4.63h-4.60zM697.60 327.01h4.60v4.63h-4.60zM697.60 336.18h4.60v18.39h-4.60zM697.60 359.10h4.60v4.63h-4.60zM697.60 382.03h4.60v22.97h-4.60zM702.15 285.74h4.60v4.63h-4.60zM702.15 299.50h4.60v13.80h-4.60zM702.15 327.01h4.60v9.22h-4.60zM702.15 340.76h4.60v4.63h-4.60zM702.15 349.93h4.60v4.63h-4.60zM702.15 359.10h4.60v9.22h-4.60zM702.15 372.86h4.60v9.22h-4.60zM702.15 395.78h4.60v9.22h-4.60zM706.70 285.74h4.60v4.63h-4.60zM706.70 294.91h4.60v4.63h-4.60zM706.70 304.08h4.60v4.63h-4.60zM706.70 313.25h4.60v4.63h-4.60zM706.70 322.42h4.60v4.63h-4.60zM706.70 331.59h4.60v4.63h-4.60zM706.70 345.35h4.60v13.80h-4.60zM706.70 368.27h4.60v9.22h-4.60zM706.70 382.03h4.60v9.22h-4.60zM706.70 395.78h4.60v9.22h-4.60zM711.25 271.99h4.60v4.63h-4.60zM711.25 290.33h4.60v4.63h-4.60zM711.25 304.08h4.60v9.22h-4.60zM711.25 317.84h4.60v4.63h-4.60zM711.25 331.59h4.60v4.63h-4.60zM711.25 340.76h4.60v18.39h-4.60zM711.25 363.69h4.60v4.63h-4.60zM711.25 377.44h4.60v9.22h-4.60zM711.25 395.78h4.60v9.22h-4.60zM715.80 271.99h4.60v4.63h-4.60zM715.80 299.50h4.60v13.80h-4.60zM715.80 317.84h4.60v9.22h-4.60zM715.80 331.59h4.60v4.63h-4.60zM715.80 340.76h4.60v4.63h-4.60zM715.80 354.52h4.60v4.63h-4.60zM715.80 363.69h4.60v4.63h-4.60zM715.80 377.44h4.60v9.22h-4.60zM715.80 391.20h4.60v9.22h-4.60zM720.35 271.99h4.60v4.63h-4.60zM720.35 285.74h4.60v9.22h-4.60zM720.35 304.08h4.60v4.63h-4.60zM720.35 313.25h4.60v9.22h-4.60zM720.35 327.01h4.60v9.22h-4.60zM720.35 345.35h4.60v27.56h-4.60zM720.35 377.44h4.60v4.63h-4.60zM720.35 391.20h4.60v9.22h-4.60zM724.90 271.99h4.60v4.63h-4.60zM724.90 281.16h4.60v4.63h-4.60zM724.90 290.33h4.60v32.14h-4.60zM724.90 327.01h4.60v4.63h-4.60zM724.90 336.18h4.60v9.22h-4.60zM724.90 363.69h4.60v4.63h-4.60zM724.90 377.44h4.60v9.22h-4.60zM724.90 395.78h4.60v9.22h-4.60zM729.45 285.74h4.60v4.63h-4.60zM729.45 299.50h4.60v4.63h-4.60zM729.45 308.67h4.60v4.63h-4.60zM729.45 317.84h4.60v4.63h-4.60zM729.45 327.01h4.60v9.22h-4.60zM729.45 345.35h4.60v22.97h-4.60zM729.45 372.86h4.60v4.63h-4.60zM729.45 391.20h4.60v13.80h-4.60zM734.00 271.99h4.60v4.63h-4.60zM734.00 285.74h4.60v9.22h-4.60zM734.00 299.50h4.60v4.63h-4.60zM734.00 313.25h4.60v13.80h-4.60zM734.00 331.59h4.60v9.22h-4.60zM734.00 349.93h4.60v4.63h-4.60zM734.00 359.10h4.60v4.63h-4.60zM734.00 368.27h4.60v18.39h-4.60zM738.55 271.99h4.60v50.48h-4.60zM738.55 327.01h4.60v9.22h-4.60zM738.55 340.76h4.60v4.63h-4.60zM738.55 354.52h4.60v4.63h-4.60zM738.55 363.69h4.60v18.39h-4.60zM738.55 391.20h4.60v13.80h-4.60zM743.10 267.41h4.60v18.39h-4.60zM743.10 290.33h4.60v45.90h-4.60zM743.10 345.35h4.60v13.80h-4.60zM743.10 363.69h4.60v13.80h-4.60zM743.10 382.03h4.60v13.80h-4.60zM743.10 400.37h4.60v9.22h-4.60zM747.65 271.99h4.60v4.63h-4.60zM747.65 294.91h4.60v4.63h-4.60zM747.65 304.08h4.60v36.73h-4.60zM747.65 359.10h4.60v27.56h-4.60zM747.65 391.20h4.60v13.80h-4.60zM752.20 281.16h4.60v18.39h-4.60zM752.20 304.08h4.60v22.97h-4.60zM752.20 331.59h4.60v4.63h-4.60zM752.20 345.35h4.60v13.80h-4.60zM752.20 363.69h4.60v18.39h-4.60zM752.20 386.61h4.60v18.39h-4.60zM756.75 267.41h4.60v4.63h-4.60zM756.75 281.16h4.60v4.63h-4.60zM756.75 290.33h4.60v9.22h-4.60zM756.75 304.08h4.60v32.14h-4.60zM756.75 345.35h4.60v32.14h-4.60zM756.75 386.61h4.60v18.39h-4.60zM756.75 409.54h4.60v4.63h-4.60zM761.30 285.74h4.60v9.22h-4.60zM761.30 313.25h4.60v13.80h-4.60zM761.30 331.59h4.60v22.97h-4.60zM761.30 372.86h4.60v9.22h-4.60zM761.30 400.37h4.60v4.63h-4.60zM765.85 271.99h4.60v4.63h-4.60zM765.85 281.16h4.60v9.22h-4.60zM765.85 299.50h4.60v4.63h-4.60zM765.85 313.25h4.60v18.39h-4.60zM765.85 336.18h4.60v4.63h-4.60zM765.85 354.52h4.60v4.63h-4.60zM765.85 363.69h4.60v4.63h-4.60zM765.85 377.44h4.60v9.22h-4.60zM765.85 391.20h4.60v4.63h-4.60zM770.40 271.99h4.60v4.63h-4.60zM770.40 285.74h4.60v9.22h-4.60zM770.40 299.50h4.60v9.22h-4.60zM770.40 313.25h4.60v4.63h-4.60zM770.40 322.42h4.60v4.63h-4.60zM770.40 331.59h4.60v45.90h-4.60zM770.40 400.37h4.60v4.63h-4.60zM774.95 271.99h4.60v4.63h-4.60zM774.95 285.74h4.60v4.63h-4.60zM774.95 294.91h4.60v27.56h-4.60zM774.95 327.01h4.60v4.63h-4.60zM774.95 336.18h4.60v13.80h-4.60zM774.95 363.69h4.60v4.63h-4.60zM774.95 372.86h4.60v4.63h-4.60zM774.95 382.03h4.60v4.63h-4.60zM774.95 400.37h4.60v4.63h-4.60zM779.50 271.99h4.60v4.63h-4.60zM779.50 285.74h4.60v4.63h-4.60zM779.50 304.08h4.60v4.63h-4.60zM779.50 317.84h4.60v36.73h-4.60zM779.50 363.69h4.60v4.63h-4.60zM779.50 372.86h4.60v13.80h-4.60zM779.50 391.20h4.60v4.63h-4.60zM779.50 400.37h4.60v4.63h-4.60zM784.05 271.99h4.60v4.63h-4.60zM784.05 281.16h4.60v55.07h-4.60zM784.05 340.76h4.60v4.63h-4.60zM784.05 349.93h4.60v4.63h-4.60zM784.05 359.10h4.60v4.63h-4.60zM784.05 368.27h4.60v4.63h-4.60zM784.05 382.03h4.60v4.63h-4.60zM784.05 395.78h4.60v9.22h-4.60zM788.60 267.41h4.60v9.22h-4.60zM788.60 281.16h4.60v9.22h-4.60zM788.60 294.91h4.60v22.97h-4.60zM788.60 322.42h4.60v13.80h-4.60zM788.60 340.76h4.60v4.63h-4.60zM788.60 349.93h4.60v13.80h-4.60zM788.60 368.27h4.60v4.63h-4.60zM788.60 382.03h4.60v4.63h-4.60zM788.60 395.78h4.60v13.80h-4.60zM793.15 271.99h4.60v4.63h-4.60zM793.15 285.74h4.60v4.63h-4.60zM793.15 299.50h4.60v4.63h-4.60zM793.15 313.25h4.60v18.39h-4.60zM793.15 336.18h4.60v13.80h-4.60zM793.15 354.52h4.60v4.63h-4.60zM793.15 363.69h4.60v9.22h-4.60zM793.15 382.03h4.60v4.63h-4.60zM793.15 391.20h4.60v13.80h-4.60zM797.70 267.41h4.60v9.22h-4.60zM797.70 281.16h4.60v9.22h-4.60zM797.70 299.50h4.60v13.80h-4.60zM797.70 317.84h4.60v4.63h-4.60zM797.70 331.59h4.60v4.63h-4.60zM797.70 340.76h4.60v41.31h-4.60zM797.70 395.78h4.60v4.63h-4.60zM802.25 271.99h4.60v18.39h-4.60zM802.25 294.91h4.60v13.80h-4.60zM802.25 313.25h4.60v18.39h-4.60zM802.25 363.69h4.60v27.56h-4.60zM802.25 395.78h4.60v9.22h-4.60zM806.80 271.99h4.60v4.63h-4.60zM806.80 281.16h4.60v4.63h-4.60zM806.80 290.33h4.60v9.22h-4.60zM806.80 308.67h4.60v13.80h-4.60zM806.80 331.59h4.60v9.22h-4.60zM806.80 345.35h4.60v9.22h-4.60zM806.80 359.10h4.60v4.63h-4.60zM806.80 372.86h4.60v9.22h-4.60zM806.80 386.61h4.60v18.39h-4.60zM811.35 267.41h4.60v9.22h-4.60zM811.35 281.16h4.60v27.56h-4.60zM811.35 313.25h4.60v18.39h-4.60zM811.35 340.76h4.60v4.63h-4.60zM811.35 349.93h4.60v9.22h-4.60zM811.35 363.69h4.60v9.22h-4.60zM811.35 377.44h4.60v4.63h-4.60zM811.35 391.20h4.60v4.63h-4.60zM811.35 400.37h4.60v4.63h-4.60zM815.90 285.74h4.60v4.63h-4.60zM815.90 299.50h4.60v18.39h-4.60zM815.90 327.01h4.60v13.80h-4.60zM815.90 354.52h4.60v32.14h-4.60zM815.90 395.78h4.60v9.22h-4.60zM820.45 285.74h4.60v9.22h-4.60zM820.45 299.50h4.60v13.80h-4.60zM820.45 327.01h4.60v4.63h-4.60zM820.45 336.18h4.60v9.22h-4.60zM820.45 349.93h4.60v4.63h-4.60zM820.45 363.69h4.60v4.63h-4.60zM820.45 372.86h4.60v4.63h-4.60zM820.45 382.03h4.60v4.63h-4.60zM820.45 400.37h4.60v4.63h-4.60zM825.00 285.74h4.60v9.22h-4.60zM825.00 304.08h4.60v9.22h-4.60zM825.00 317.84h4.60v13.80h-4.60zM825.00 354.52h4.60v13.80h-4.60zM825.00 377.44h4.60v9.22h-4.60zM825.00 400.37h4.60v4.63h-4.60zM829.55 267.41h4.60v9.22h-4.60zM829.55 281.16h4.60v9.22h-4.60zM829.55 294.91h4.60v4.63h-4.60zM829.55 308.67h4.60v9.22h-4.60zM829.55 327.01h4.60v4.63h-4.60zM829.55 336.18h4.60v9.22h-4.60zM829.55 349.93h4.60v9.22h-4.60zM829.55 363.69h4.60v41.31h-4.60zM834.10 281.16h4.60v27.56h-4.60zM834.10 317.84h4.60v18.39h-4.60zM834.10 340.76h4.60v36.73h-4.60zM834.10 382.03h4.60v22.97h-4.60zM838.65 271.99h4.60v4.63h-4.60zM838.65 285.74h4.60v4.63h-4.60zM838.65 294.91h4.60v9.22h-4.60zM838.65 313.25h4.60v13.80h-4.60zM838.65 331.59h4.60v9.22h-4.60zM838.65 345.35h4.60v22.97h-4.60zM838.65 372.86h4.60v9.22h-4.60zM838.65 391.20h4.60v13.80h-4.60zM843.20 267.41h4.60v4.63h-4.60zM843.20 285.74h4.60v32.14h-4.60zM843.20 327.01h4.60v22.97h-4.60zM843.20 354.52h4.60v18.39h-4.60zM843.20 382.03h4.60v22.97h-4.60zM847.75 267.41h4.60v4.63h-4.60zM847.75 285.74h4.60v22.97h-4.60zM847.75 313.25h4.60v27.56h-4.60zM847.75 345.35h4.60v4.63h-4.60zM847.75 363.69h4.60v4.63h-4.60zM847.75 372.86h4.60v4.63h-4.60zM847.75 382.03h4.60v13.80h-4.60zM847.75 400.37h4.60v4.63h-4.60zM852.30 271.99h4.60v4.63h-4.60zM852.30 281.16h4.60v22.97h-4.60zM852.30 308.67h4.60v4.63h-4.60zM852.30 317.84h4.60v9.22h-4.60zM852.30 336.18h4.60v22.97h-4.60zM852.30 363.69h4.60v18.39h-4.60zM852.30 386.61h4.60v9.22h-4.60zM852.30 400.37h4.60v4.63h-4.60zM856.85 271.99h4.60v36.73h-4.60zM856.85 313.25h4.60v18.39h-4.60zM856.85 336.18h4.60v18.39h-4.60zM856.85 363.69h4.60v9.22h-4.60zM856.85 377.44h4.60v4.63h-4.60zM856.85 391.20h4.60v13.80h-4.60zM861.40 271.99h4.60v4.63h-4.60zM861.40 281.16h4.60v13.80h-4.60zM861.40 299.50h4.60v9.22h-4.60zM861.40 313.25h4.60v4.63h-4.60zM861.40 331.59h4.60v9.22h-4.60zM861.40 345.35h4.60v18.39h-4.60zM861.40 368.27h4.60v36.73h-4.60zM865.95 271.99h4.60v4.63h-4.60zM865.95 290.33h4.60v18.39h-4.60zM865.95 322.42h4.60v4.63h-4.60zM865.95 336.18h4.60v9.22h-4.60zM865.95 354.52h4.60v4.63h-4.60zM865.95 368.27h4.60v18.39h-4.60zM865.95 391.20h4.60v13.80h-4.60zM870.50 271.99h4.60v22.97h-4.60zM870.50 299.50h4.60v9.22h-4.60zM870.50 313.25h4.60v4.63h-4.60zM870.50 322.42h4.60v9.22h-4.60zM870.50 336.18h4.60v4.63h-4.60zM870.50 345.35h4.60v22.97h-4.60zM870.50 372.86h4.60v4.63h-4.60zM870.50 382.03h4.60v4.63h-4.60zM870.50 391.20h4.60v13.80h-4.60zM875.05 281.16h4.60v9.22h-4.60zM875.05 313.25h4.60v9.22h-4.60zM875.05 327.01h4.60v4.63h-4.60zM875.05 349.93h4.60v4.63h-4.60zM875.05 359.10h4.60v13.80h-4.60zM875.05 377.44h4.60v27.56h-4.60zM879.60 267.41h4.60v22.97h-4.60zM879.60 294.91h4.60v4.63h-4.60zM879.60 304.08h4.60v4.63h-4.60zM879.60 317.84h4.60v13.80h-4.60zM879.60 340.76h4.60v18.39h-4.60zM879.60 363.69h4.60v9.22h-4.60zM879.60 377.44h4.60v18.39h-4.60zM884.15 267.41h4.60v13.80h-4.60zM884.15 285.74h4.60v9.22h-4.60zM884.15 299.50h4.60v4.63h-4.60zM884.15 313.25h4.60v4.63h-4.60zM884.15 331.59h4.60v4.63h-4.60zM884.15 345.35h4.60v9.22h-4.60zM884.15 359.10h4.60v4.63h-4.60zM884.15 368.27h4.60v13.80h-4.60zM884.15 386.61h4.60v9.22h-4.60zM888.70 271.99h4.60v4.63h-4.60zM888.70 285.74h4.60v4.63h-4.60zM888.70 304.08h4.60v4.63h-4.60zM888.70 313.25h4.60v9.22h-4.60zM888.70 327.01h4.60v4.63h-4.60zM888.70 336.18h4.60v36.73h-4.60zM888.70 377.44h4.60v4.63h-4.60zM893.25 276.57h4.60v4.63h-4.60zM893.25 294.91h4.60v9.22h-4.60zM893.25 308.67h4.60v13.80h-4.60zM893.25 327.01h4.60v4.63h-4.60zM893.25 349.93h4.60v13.80h-4.60zM893.25 368.27h4.60v9.22h-4.60zM893.25 386.61h4.60v9.22h-4.60zM897.80 285.74h4.60v4.63h-4.60zM897.80 299.50h4.60v9.22h-4.60zM897.80 327.01h4.60v9.22h-4.60zM897.80 340.76h4.60v4.63h-4.60zM897.80 349.93h4.60v9.22h-4.60zM897.80 363.69h4.60v4.63h-4.60zM902.35 290.33h4.60v4.63h-4.60zM902.35 299.50h4.60v4.63h-4.60zM902.35 308.67h4.60v9.22h-4.60zM902.35 322.42h4.60v4.63h-4.60zM902.35 336.18h4.60v9.22h-4.60zM902.35 349.93h4.60v4.63h-4.60zM902.35 359.10h4.60v18.39h-4.60zM906.90 281.16h4.60v4.63h-4.60zM906.90 290.33h4.60v4.63h-4.60zM906.90 308.67h4.60v4.63h-4.60zM906.90 322.42h4.60v4.63h-4.60zM906.90 331.59h4.60v4.63h-4.60zM906.90 349.93h4.60v22.97h-4.60zM906.90 382.03h4.60v4.63h-4.60zM911.45 271.99h4.60v4.63h-4.60zM911.45 290.33h4.60v4.63h-4.60zM911.45 299.50h4.60v4.63h-4.60zM911.45 308.67h4.60v13.80h-4.60zM911.45 327.01h4.60v32.14h-4.60zM916.00 267.41h4.60v9.22h-4.60zM916.00 281.16h4.60v9.22h-4.60zM916.00 299.50h4.60v27.56h-4.60zM916.00 331.59h4.60v4.63h-4.60zM916.00 340.76h4.60v13.80h-4.60zM916.00 359.10h4.60v4.63h-4.60zM916.00 368.27h4.60v4.63h-4.60zM916.00 377.44h4.60v9.22h-4.60zM920.55 285.74h4.60v4.63h-4.60zM920.55 299.50h4.60v4.63h-4.60zM920.55 317.84h4.60v9.22h-4.60zM920.55 331.59h4.60v4.63h-4.60zM920.55 354.52h4.60v13.80h-4.60zM920.55 377.44h4.60v4.63h-4.60zM925.10 267.41h4.60v18.39h-4.60zM925.10 290.33h4.60v9.22h-4.60zM925.10 304.08h4.60v9.22h-4.60zM925.10 317.84h4.60v4.63h-4.60zM925.10 331.59h4.60v18.39h-4.60zM925.10 354.52h4.60v4.63h-4.60zM925.10 363.69h4.60v4.63h-4.60zM925.10 382.03h4.60v4.63h-4.60zM929.65 267.41h4.60v9.22h-4.60zM929.65 281.16h4.60v27.56h-4.60zM929.65 313.25h4.60v9.22h-4.60zM929.65 327.01h4.60v27.56h-4.60zM929.65 363.69h4.60v18.39h-4.60zM934.20 271.99h4.60v4.63h-4.60zM934.20 281.16h4.60v18.39h-4.60zM934.20 304.08h4.60v13.80h-4.60zM934.20 327.01h4.60v4.63h-4.60zM934.20 336.18h4.60v4.63h-4.60zM934.20 349.93h4.60v27.56h-4.60zM934.20 382.03h4.60v4.63h-4.60zM938.75 267.41h4.60v22.97h-4.60zM938.75 313.25h4.60v13.80h-4.60zM938.75 331.59h4.60v9.22h-4.60zM938.75 345.35h4.60v9.22h-4.60zM943.30 271.99h4.60v4.63h-4.60zM943.30 285.74h4.60v13.80h-4.60zM943.30 304.08h4.60v22.97h-4.60zM943.30 340.76h4.60v9.22h-4.60zM943.30 354.52h4.60v4.63h-4.60zM947.85 281.16h4.60v36.73h-4.60zM947.85 322.42h4.60v22.97h-4.60zM947.85 349.93h4.60v4.63h-4.60zM952.40 267.41h4.60v9.22h-4.60zM952.40 281.16h4.60v36.73h-4.60zM952.40 322.42h4.60v13.80h-4.60zM952.40 345.35h4.60v4.63h-4.60zM952.40 363.69h4.60v18.39h-4.60zM956.95 271.99h4.60v4.63h-4.60zM956.95 281.16h4.60v4.63h-4.60zM956.95 290.33h4.60v4.63h-4.60zM956.95 299.50h4.60v9.22h-4.60zM956.95 313.25h4.60v9.22h-4.60zM956.95 327.01h4.60v9.22h-4.60zM956.95 340.76h4.60v9.22h-4.60zM956.95 354.52h4.60v18.39h-4.60zM956.95 377.44h4.60v4.63h-4.60zM961.50 267.41h4.60v9.22h-4.60zM961.50 281.16h4.60v4.63h-4.60zM961.50 290.33h4.60v22.97h-4.60zM961.50 317.84h4.60v9.22h-4.60zM961.50 331.59h4.60v4.63h-4.60zM961.50 349.93h4.60v4.63h-4.60zM961.50 359.10h4.60v18.39h-4.60zM961.50 382.03h4.60v4.63h-4.60zM966.05 276.57h4.60v13.80h-4.60zM966.05 294.91h4.60v4.63h-4.60zM966.05 304.08h4.60v9.22h-4.60zM966.05 317.84h4.60v9.22h-4.60zM966.05 331.59h4.60v4.63h-4.60zM966.05 340.76h4.60v4.63h-4.60zM966.05 349.93h4.60v18.39h-4.60zM966.05 372.86h4.60v9.22h-4.60zM970.60 271.99h4.60v4.63h-4.60zM970.60 281.16h4.60v4.63h-4.60zM970.60 290.33h4.60v22.97h-4.60zM970.60 317.84h4.60v4.63h-4.60zM970.60 327.01h4.60v4.63h-4.60zM970.60 336.18h4.60v13.80h-4.60zM970.60 354.52h4.60v9.22h-4.60zM970.60 382.03h4.60v4.63h-4.60zM975.15 267.41h4.60v9.22h-4.60zM975.15 281.16h4.60v4.63h-4.60zM975.15 290.33h4.60v9.22h-4.60zM975.15 304.08h4.60v4.63h-4.60zM975.15 313.25h4.60v4.63h-4.60zM975.15 322.42h4.60v22.97h-4.60zM975.15 359.10h4.60v18.39h-4.60zM975.15 382.03h4.60v4.63h-4.60z" fill="#ff3000"/>
</g>
<ellipse cx="918" cy="370" rx="58" ry="34" fill="#9888e8" fill-opacity=".5" filter="url(#bl2)"/>
<ellipse cx="815" cy="404" rx="42" ry="9" fill="#9080d8" fill-opacity=".34" filter="url(#bl2)"/>
<ellipse cx="860" cy="330" rx="120" ry="70" fill="#b0a0e0" fill-opacity=".10"/>
<rect x="938.8" y="361" width="13.6" height="43" fill="#e4f000" fill-opacity=".55"/>
<rect x="693.05" y="207.8" width="285.6" height="263.2" fill="url(#st)"/>
<rect x="665.7" y="207.8" width="27.35" height="263.2" fill="url(#st2)"/>
<rect x="978.65" y="207.8" width="39.7" height="263.2" fill="url(#st2)"/>
</g>
<g clip-path="url(#hc)" opacity=".55"><path d="M614.04 160.7v352.0M634.72 160.7v352.0M655.40 160.7v352.0M676.08 160.7v352.0M696.76 160.7v352.0M717.44 160.7v352.0M738.12 160.7v352.0M779.48 160.7v352.0M800.16 160.7v352.0M820.84 160.7v352.0M841.52 160.7v352.0M862.20 160.7v352.0M882.88 160.7v352.0M903.56 160.7v352.0M924.24 160.7v352.0M944.92 160.7v352.0M986.28 160.7v352.0M1006.96 160.7v352.0M1027.64 160.7v352.0M1048.32 160.7v352.0M1069.00 160.7v352.0M605.2 183.78h473.8M605.2 225.14h473.8M605.2 266.50h473.8M605.2 307.86h473.8M605.2 349.22h473.8M605.2 390.58h473.8M605.2 431.94h473.8M605.2 473.30h473.8" stroke="#5a5a5a" stroke-width=".7" fill="none"/><path d="M758.80 160.7v352.0M965.60 160.7v352.0M605.2 163.10h473.8M605.2 204.46h473.8M605.2 245.82h473.8M605.2 287.18h473.8M605.2 328.54h473.8M605.2 369.90h473.8M605.2 411.26h473.8M605.2 452.62h473.8M605.2 493.98h473.8" stroke="#222" stroke-width=".9" fill="none"/></g>
<path d="M1008.60 214.6v240M1010.87 214.6v240M1013.14 214.6v240M1015.41 214.6v240M1017.68 214.6v240" stroke="#b4b4b4" stroke-width="1.45" fill="none"/>
<path d="M697 209.2h3.6M708.5 209.2h4.6M727 209.2h7M739 209.2h9M715 211.5h1.5M722 211.5h1.2M1007.6 216.4h10M1008 219.8h1.5M1016 219.8h1.5" stroke="#fff" stroke-opacity=".85" stroke-width="1.2" stroke-dasharray="1 .55" fill="none"/>
<path d="M666 470.2h13" stroke="#fff" stroke-opacity=".7" stroke-width="1.1" stroke-dasharray="1 .6" fill="none"/>
<rect x="717.00" y="213.70" width="289.50" height="4" fill="url(#sh)"/>
<rect x="717.00" y="231.92" width="289.50" height="4" fill="url(#sh)"/>
<rect x="679.40" y="250.14" width="327.10" height="4" fill="url(#sh)"/>
<rect x="679.40" y="268.36" width="327.10" height="4" fill="url(#sh)"/>
<rect x="679.40" y="286.58" width="327.10" height="4" fill="url(#sh)"/>
<rect x="679.40" y="304.80" width="327.10" height="4" fill="url(#sh)"/>
<rect x="679.40" y="323.02" width="327.10" height="4" fill="url(#sh)"/>
<rect x="679.40" y="341.24" width="327.10" height="4" fill="url(#sh)"/>
<rect x="679.40" y="359.46" width="327.10" height="4" fill="url(#sh)"/>
<rect x="679.40" y="377.68" width="327.10" height="4" fill="url(#sh)"/>
<rect x="679.40" y="395.90" width="327.10" height="4" fill="url(#sh)"/>
<rect x="679.40" y="414.12" width="327.10" height="4" fill="url(#sh)"/>
<rect x="679.40" y="432.34" width="280.60" height="4" fill="url(#sh)"/>
<rect x="679.40" y="450.56" width="215.60" height="4" fill="url(#sh)"/>
<rect x="679.40" y="468.78" width="225.60" height="4" fill="url(#sh)"/>
<circle cx="681.70" cy="201.40" r="1.15" fill="#f0a070" fill-opacity=".4" stroke="#d84424" stroke-width=".8"/><circle cx="686.26" cy="201.40" r="1.15" fill="#f0a070" fill-opacity=".4" stroke="#d84424" stroke-width=".8"/><circle cx="690.82" cy="201.40" r="1.15" fill="#f0a070" fill-opacity=".4" stroke="#d84424" stroke-width=".8"/><circle cx="695.38" cy="201.40" r="1.15" fill="#f0a070" fill-opacity=".4" stroke="#d84424" stroke-width=".8"/><circle cx="699.94" cy="201.40" r="1.15" fill="#f0a070" fill-opacity=".4" stroke="#d84424" stroke-width=".8"/><circle cx="704.50" cy="201.40" r="1.15" fill="#f0a070" fill-opacity=".4" stroke="#d84424" stroke-width=".8"/><circle cx="709.06" cy="201.40" r="1.15" fill="#f0a070" fill-opacity=".4" stroke="#d84424" stroke-width=".8"/><circle cx="713.62" cy="201.40" r="1.15" fill="#f0a070" fill-opacity=".4" stroke="#d84424" stroke-width=".8"/><circle cx="897.00" cy="470.00" r="1.15" fill="#f0a070" fill-opacity=".4" stroke="#d84424" stroke-width=".8"/><circle cx="901.55" cy="468.80" r="1.15" fill="#f0a070" fill-opacity=".4" stroke="#d84424" stroke-width=".8"/><circle cx="906.10" cy="467.63" r="1.15" fill="#f0a070" fill-opacity=".4" stroke="#d84424" stroke-width=".8"/><circle cx="910.65" cy="466.51" r="1.15" fill="#f0a070" fill-opacity=".4" stroke="#d84424" stroke-width=".8"/><circle cx="915.20" cy="465.47" r="1.15" fill="#f0a070" fill-opacity=".4" stroke="#d84424" stroke-width=".8"/><circle cx="919.75" cy="464.53" r="1.15" fill="#f0a070" fill-opacity=".4" stroke="#d84424" stroke-width=".8"/><circle cx="924.30" cy="463.72" r="1.15" fill="#f0a070" fill-opacity=".4" stroke="#d84424" stroke-width=".8"/><circle cx="928.85" cy="463.05" r="1.15" fill="#f0a070" fill-opacity=".4" stroke="#d84424" stroke-width=".8"/><circle cx="933.40" cy="462.53" r="1.15" fill="#f0a070" fill-opacity=".4" stroke="#d84424" stroke-width=".8"/><circle cx="937.95" cy="462.19" r="1.15" fill="#f0a070" fill-opacity=".4" stroke="#d84424" stroke-width=".8"/><circle cx="942.50" cy="462.02" r="1.15" fill="#f0a070" fill-opacity=".4" stroke="#d84424" stroke-width=".8"/><circle cx="947.05" cy="462.03" r="1.15" fill="#f0a070" fill-opacity=".4" stroke="#d84424" stroke-width=".8"/><circle cx="951.60" cy="462.22" r="1.15" fill="#f0a070" fill-opacity=".4" stroke="#d84424" stroke-width=".8"/><circle cx="956.15" cy="462.59" r="1.15" fill="#f0a070" fill-opacity=".4" stroke="#d84424" stroke-width=".8"/><circle cx="960.70" cy="463.12" r="1.15" fill="#f0a070" fill-opacity=".4" stroke="#d84424" stroke-width=".8"/><circle cx="965.25" cy="463.81" r="1.15" fill="#f0a070" fill-opacity=".4" stroke="#d84424" stroke-width=".8"/><circle cx="969.80" cy="464.64" r="1.15" fill="#f0a070" fill-opacity=".4" stroke="#d84424" stroke-width=".8"/><circle cx="974.35" cy="465.59" r="1.15" fill="#f0a070" fill-opacity=".4" stroke="#d84424" stroke-width=".8"/><circle cx="978.90" cy="466.64" r="1.15" fill="#f0a070" fill-opacity=".4" stroke="#d84424" stroke-width=".8"/><circle cx="983.45" cy="467.77" r="1.15" fill="#f0a070" fill-opacity=".4" stroke="#d84424" stroke-width=".8"/><circle cx="988.00" cy="468.94" r="1.15" fill="#f0a070" fill-opacity=".4" stroke="#d84424" stroke-width=".8"/><circle cx="992.55" cy="470.00" r="1.15" fill="#f0a070" fill-opacity=".4" stroke="#d84424" stroke-width=".8"/><circle cx="997.10" cy="470.00" r="1.15" fill="#f0a070" fill-opacity=".4" stroke="#d84424" stroke-width=".8"/><circle cx="1001.65" cy="470.00" r="1.15" fill="#f0a070" fill-opacity=".4" stroke="#d84424" stroke-width=".8"/><circle cx="900.00" cy="452.00" r="1.15" fill="#f0a070" fill-opacity=".4" stroke="#d84424" stroke-width=".8"/><circle cx="904.55" cy="451.68" r="1.15" fill="#f0a070" fill-opacity=".4" stroke="#d84424" stroke-width=".8"/><circle cx="909.10" cy="451.36" r="1.15" fill="#f0a070" fill-opacity=".4" stroke="#d84424" stroke-width=".8"/><circle cx="913.65" cy="451.04" r="1.15" fill="#f0a070" fill-opacity=".4" stroke="#d84424" stroke-width=".8"/><circle cx="918.20" cy="450.73" r="1.15" fill="#f0a070" fill-opacity=".4" stroke="#d84424" stroke-width=".8"/><circle cx="922.75" cy="450.41" r="1.15" fill="#f0a070" fill-opacity=".4" stroke="#d84424" stroke-width=".8"/><circle cx="927.30" cy="450.09" r="1.15" fill="#f0a070" fill-opacity=".4" stroke="#d84424" stroke-width=".8"/><circle cx="931.85" cy="449.77" r="1.15" fill="#f0a070" fill-opacity=".4" stroke="#d84424" stroke-width=".8"/><circle cx="936.40" cy="449.45" r="1.15" fill="#f0a070" fill-opacity=".4" stroke="#d84424" stroke-width=".8"/><circle cx="940.95" cy="449.13" r="1.15" fill="#f0a070" fill-opacity=".4" stroke="#d84424" stroke-width=".8"/><circle cx="945.50" cy="448.81" r="1.15" fill="#f0a070" fill-opacity=".4" stroke="#d84424" stroke-width=".8"/><circle cx="950.05" cy="448.46" r="1.15" fill="#f0a070" fill-opacity=".4" stroke="#d84424" stroke-width=".8"/><circle cx="954.60" cy="444.36" r="1.15" fill="#f0a070" fill-opacity=".4" stroke="#d84424" stroke-width=".8"/><circle cx="959.15" cy="440.27" r="1.15" fill="#f0a070" fill-opacity=".4" stroke="#d84424" stroke-width=".8"/><circle cx="963.70" cy="436.17" r="1.15" fill="#f0a070" fill-opacity=".4" stroke="#d84424" stroke-width=".8"/><circle cx="968.25" cy="432.07" r="1.15" fill="#f0a070" fill-opacity=".4" stroke="#d84424" stroke-width=".8"/><circle cx="972.80" cy="427.98" r="1.15" fill="#f0a070" fill-opacity=".4" stroke="#d84424" stroke-width=".8"/><circle cx="977.35" cy="423.88" r="1.15" fill="#f0a070" fill-opacity=".4" stroke="#d84424" stroke-width=".8"/><circle cx="981.90" cy="419.79" r="1.15" fill="#f0a070" fill-opacity=".4" stroke="#d84424" stroke-width=".8"/><circle cx="986.45" cy="415.69" r="1.15" fill="#f0a070" fill-opacity=".4" stroke="#d84424" stroke-width=".8"/><circle cx="935.00" cy="418.00" r="1.15" fill="#f0a070" fill-opacity=".4" stroke="#d84424" stroke-width=".8"/><circle cx="939.55" cy="419.77" r="1.15" fill="#f0a070" fill-opacity=".4" stroke="#d84424" stroke-width=".8"/><circle cx="944.10" cy="421.22" r="1.15" fill="#f0a070" fill-opacity=".4" stroke="#d84424" stroke-width=".8"/><circle cx="948.65" cy="422.08" r="1.15" fill="#f0a070" fill-opacity=".4" stroke="#d84424" stroke-width=".8"/><circle cx="953.20" cy="422.17" r="1.15" fill="#f0a070" fill-opacity=".4" stroke="#d84424" stroke-width=".8"/><circle cx="957.75" cy="421.41" r="1.15" fill="#f0a070" fill-opacity=".4" stroke="#d84424" stroke-width=".8"/><circle cx="962.30" cy="419.84" r="1.15" fill="#f0a070" fill-opacity=".4" stroke="#d84424" stroke-width=".8"/><circle cx="966.85" cy="417.63" r="1.15" fill="#f0a070" fill-opacity=".4" stroke="#d84424" stroke-width=".8"/><circle cx="971.40" cy="415.01" r="1.15" fill="#f0a070" fill-opacity=".4" stroke="#d84424" stroke-width=".8"/><circle cx="975.95" cy="412.30" r="1.15" fill="#f0a070" fill-opacity=".4" stroke="#d84424" stroke-width=".8"/><circle cx="980.50" cy="409.82" r="1.15" fill="#f0a070" fill-opacity=".4" stroke="#d84424" stroke-width=".8"/><circle cx="985.05" cy="407.85" r="1.15" fill="#f0a070" fill-opacity=".4" stroke="#d84424" stroke-width=".8"/><circle cx="965.00" cy="395.00" r="1.15" fill="#f0a070" fill-opacity=".4" stroke="#d84424" stroke-width=".8"/><circle cx="969.55" cy="398.41" r="1.15" fill="#f0a070" fill-opacity=".4" stroke="#d84424" stroke-width=".8"/><circle cx="974.10" cy="401.83" r="1.15" fill="#f0a070" fill-opacity=".4" stroke="#d84424" stroke-width=".8"/><circle cx="978.65" cy="405.24" r="1.15" fill="#f0a070" fill-opacity=".4" stroke="#d84424" stroke-width=".8"/><circle cx="983.20" cy="408.65" r="1.15" fill="#f0a070" fill-opacity=".4" stroke="#d84424" stroke-width=".8"/><circle cx="987.75" cy="412.06" r="1.15" fill="#f0a070" fill-opacity=".4" stroke="#d84424" stroke-width=".8"/><circle cx="992.30" cy="415.47" r="1.15" fill="#f0a070" fill-opacity=".4" stroke="#d84424" stroke-width=".8"/><circle cx="996.85" cy="418.89" r="1.15" fill="#f0a070" fill-opacity=".4" stroke="#d84424" stroke-width=".8"/><circle cx="1001.40" cy="422.30" r="1.15" fill="#f0a070" fill-opacity=".4" stroke="#d84424" stroke-width=".8"/><circle cx="1005.95" cy="425.71" r="1.15" fill="#f0a070" fill-opacity=".4" stroke="#d84424" stroke-width=".8"/>
<path d="M652.20 215.5V470.6M679.50 215.5V470.6M706.80 215.5V470.6M734.10 215.5V470.6M761.40 215.5V470.6M788.70 215.5V470.6M816.00 215.5V470.6M843.30 215.5V470.6M870.60 215.5V470.6M897.90 215.5V470.6M925.20 215.5V470.6M952.50 215.5V470.6M979.80 215.5V470.6M1007.10 215.5V470.6M1029.60 215.5V470.6" stroke="#2a1cc4" stroke-width="3" fill="none"/>
<path d="M652.20 215.5V470.6M679.50 215.5V470.6M706.80 215.5V470.6M734.10 215.5V470.6M761.40 215.5V470.6M788.70 215.5V470.6M816.00 215.5V470.6M843.30 215.5V470.6M870.60 215.5V470.6M897.90 215.5V470.6M925.20 215.5V470.6M952.50 215.5V470.6M979.80 215.5V470.6M1007.10 215.5V470.6M1029.60 215.5V470.6" stroke="#1a1aee" stroke-width="2.1" fill="none"/>
<path d="M652.20 215.5V470.6M679.50 215.5V470.6M706.80 215.5V470.6M734.10 215.5V470.6M761.40 215.5V470.6M788.70 215.5V470.6M816.00 215.5V470.6M843.30 215.5V470.6M870.60 215.5V470.6M897.90 215.5V470.6M925.20 215.5V470.6M952.50 215.5V470.6M979.80 215.5V470.6M1007.10 215.5V470.6M1029.60 215.5V470.6" stroke="#d4d4ff" stroke-width="1" stroke-dasharray=".8 1.1" fill="none"/>
<text transform="translate(607.20 165.00) scale(.77 1)" font-family="Liberation Mono,DejaVu Sans Mono,monospace" font-size="5.8" fill="#111" text-anchor="start">2196000</text>
<text transform="translate(1074.80 165.00) scale(.77 1)" font-family="Liberation Mono,DejaVu Sans Mono,monospace" font-size="5.8" fill="#111" text-anchor="end">2196000</text>
<path d="M605.2 163.10h2M1075 163.10h2" stroke="#222" stroke-width=".6"/>
<text transform="translate(607.20 206.36) scale(.77 1)" font-family="Liberation Mono,DejaVu Sans Mono,monospace" font-size="5.8" fill="#111" text-anchor="start">2194000</text>
<text transform="translate(1074.80 206.36) scale(.77 1)" font-family="Liberation Mono,DejaVu Sans Mono,monospace" font-size="5.8" fill="#111" text-anchor="end">2194000</text>
<path d="M605.2 204.46h2M1075 204.46h2" stroke="#222" stroke-width=".6"/>
<text transform="translate(607.20 247.72) scale(.77 1)" font-family="Liberation Mono,DejaVu Sans Mono,monospace" font-size="5.8" fill="#111" text-anchor="start">2192000</text>
<text transform="translate(1074.80 247.72) scale(.77 1)" font-family="Liberation Mono,DejaVu Sans Mono,monospace" font-size="5.8" fill="#111" text-anchor="end">2192000</text>
<path d="M605.2 245.82h2M1075 245.82h2" stroke="#222" stroke-width=".6"/>
<text transform="translate(607.20 289.08) scale(.77 1)" font-family="Liberation Mono,DejaVu Sans Mono,monospace" font-size="5.8" fill="#111" text-anchor="start">2190000</text>
<text transform="translate(1074.80 289.08) scale(.77 1)" font-family="Liberation Mono,DejaVu Sans Mono,monospace" font-size="5.8" fill="#111" text-anchor="end">2190000</text>
<path d="M605.2 287.18h2M1075 287.18h2" stroke="#222" stroke-width=".6"/>
<text transform="translate(607.20 330.44) scale(.77 1)" font-family="Liberation Mono,DejaVu Sans Mono,monospace" font-size="5.8" fill="#111" text-anchor="start">2188000</text>
<text transform="translate(1074.80 330.44) scale(.77 1)" font-family="Liberation Mono,DejaVu Sans Mono,monospace" font-size="5.8" fill="#111" text-anchor="end">2188000</text>
<path d="M605.2 328.54h2M1075 328.54h2" stroke="#222" stroke-width=".6"/>
<text transform="translate(607.20 371.80) scale(.77 1)" font-family="Liberation Mono,DejaVu Sans Mono,monospace" font-size="5.8" fill="#111" text-anchor="start">2186000</text>
<text transform="translate(1074.80 371.80) scale(.77 1)" font-family="Liberation Mono,DejaVu Sans Mono,monospace" font-size="5.8" fill="#111" text-anchor="end">2186000</text>
<path d="M605.2 369.90h2M1075 369.90h2" stroke="#222" stroke-width=".6"/>
<text transform="translate(607.20 413.16) scale(.77 1)" font-family="Liberation Mono,DejaVu Sans Mono,monospace" font-size="5.8" fill="#111" text-anchor="start">2184000</text>
<text transform="translate(1074.80 413.16) scale(.77 1)" font-family="Liberation Mono,DejaVu Sans Mono,monospace" font-size="5.8" fill="#111" text-anchor="end">2184000</text>
<path d="M605.2 411.26h2M1075 411.26h2" stroke="#222" stroke-width=".6"/>
<text transform="translate(607.20 454.52) scale(.77 1)" font-family="Liberation Mono,DejaVu Sans Mono,monospace" font-size="5.8" fill="#111" text-anchor="start">2182000</text>
<text transform="translate(1074.80 454.52) scale(.77 1)" font-family="Liberation Mono,DejaVu Sans Mono,monospace" font-size="5.8" fill="#111" text-anchor="end">2182000</text>
<path d="M605.2 452.62h2M1075 452.62h2" stroke="#222" stroke-width=".6"/>
<text transform="translate(607.20 495.88) scale(.77 1)" font-family="Liberation Mono,DejaVu Sans Mono,monospace" font-size="5.8" fill="#111" text-anchor="start">2180000</text>
<text transform="translate(1074.80 495.88) scale(.77 1)" font-family="Liberation Mono,DejaVu Sans Mono,monospace" font-size="5.8" fill="#111" text-anchor="end">2180000</text>
<path d="M605.2 493.98h2M1075 493.98h2" stroke="#222" stroke-width=".6"/>
<text transform="translate(758.80 167.00) scale(.77 1)" font-family="Liberation Mono,DejaVu Sans Mono,monospace" font-size="5.8" fill="#111" text-anchor="middle">710000</text>
<text transform="translate(758.80 508.80) scale(.77 1)" font-family="Liberation Mono,DejaVu Sans Mono,monospace" font-size="5.8" fill="#111" text-anchor="middle">710000</text>
<text transform="translate(965.60 167.00) scale(.77 1)" font-family="Liberation Mono,DejaVu Sans Mono,monospace" font-size="5.8" fill="#111" text-anchor="middle">720000</text>
<text transform="translate(965.60 508.80) scale(.77 1)" font-family="Liberation Mono,DejaVu Sans Mono,monospace" font-size="5.8" fill="#111" text-anchor="middle">720000</text>
<text transform="translate(606.00 370.40) scale(.77 1)" font-family="Liberation Mono,DejaVu Sans Mono,monospace" font-size="5.8" fill="#e4582c" text-anchor="start">Inline</text>
<circle cx="613.2" cy="372.6" r="1.6" fill="#e8603c"/>
<text transform="translate(605.60 490.60) scale(.77 1)" font-family="Liberation Mono,DejaVu Sans Mono,monospace" font-size="5.8" fill="#e4582c" text-anchor="start">Origin</text>
<circle cx="613.2" cy="494" r="1.6" fill="#e8603c"/>
<text transform="translate(720.80 490.60) scale(.77 1)" font-family="Liberation Mono,DejaVu Sans Mono,monospace" font-size="5.8" fill="#e4582c" text-anchor="start">Crossline</text>
<circle cx="734.0" cy="494" r="1.7" fill="#e8704c"/>
</svg>
<div class="abs" style="left:598.00px;top:529.20px;width:496.00px;height:62.60px;background:#dbdbdb"></div>
<div class="abs" style="left:598.00px;top:529.20px;width:496.00px;height:0.90px;background:#ededed"></div>
<div class="abs" style="left:598.00px;top:529.20px;width:0.90px;height:62.60px;background:#9a9a9a"></div>
<div class="abs" style="left:602.00px;top:533.60px;width:488.30px;height:11.90px;background:#c5c9ab;border-right:1px solid #74745c;border-bottom:1.1px solid #74745c;box-sizing:border-box"></div>
<div class="abs" style="left:627.60px;top:535.10px;width:430.40px;height:7.60px;background:linear-gradient(90deg,#e4e4ff 0.00px,#e4e4ff 26.90px,#a4acf8 26.90px,#a4acf8 53.80px,#6478e8 53.80px,#6478e8 80.70px,#6494a8 80.70px,#6494a8 107.60px,#64a878 107.60px,#64a878 134.50px,#68b848 134.50px,#68b848 161.40px,#94cc0c 161.40px,#94cc0c 188.30px,#dcec00 188.30px,#dcec00 215.20px,#ffff00 215.20px,#ffff00 242.10px,#ffc800 242.10px,#ffc800 269.00px,#ff9c00 269.00px,#ff9c00 295.90px,#ff7000 295.90px,#ff7000 322.80px,#ff4c00 322.80px,#ff4c00 349.70px,#ff3000 349.70px,#ff3000 376.60px,#dc2800 376.60px,#dc2800 403.50px,#b42000 403.50px,#b42000 430.40px)"></div>
<div class="mn" style="left:604.60px;top:535.65px;font-size:5.79px;color:#2c482c;transform:scaleX(.77);transform-origin:0 0;">CDP fold</div>
<div class="mn" style="left:652.43px;top:535.45px;font-size:5.79px;color:#303010;transform:scaleX(.77);transform-origin:0 0;">3</div>
<div class="mn" style="left:679.33px;top:535.45px;font-size:5.79px;color:#303010;transform:scaleX(.77);transform-origin:0 0;">6</div>
<div class="mn" style="left:706.23px;top:535.45px;font-size:5.79px;color:#303010;transform:scaleX(.77);transform-origin:0 0;">9</div>
<div class="mn" style="left:730.46px;top:535.45px;font-size:5.79px;color:#303010;transform:scaleX(.77);transform-origin:0 0;">13</div>
<div class="mn" style="left:757.36px;top:535.45px;font-size:5.79px;color:#303010;transform:scaleX(.77);transform-origin:0 0;">16</div>
<div class="mn" style="left:784.26px;top:535.45px;font-size:5.79px;color:#303010;transform:scaleX(.77);transform-origin:0 0;">19</div>
<div class="mn" style="left:811.16px;top:535.45px;font-size:5.79px;color:#303010;transform:scaleX(.77);transform-origin:0 0;">22</div>
<div class="mn" style="left:838.06px;top:535.45px;font-size:5.79px;color:#303010;transform:scaleX(.77);transform-origin:0 0;">25</div>
<div class="mn" style="left:864.96px;top:535.45px;font-size:5.79px;color:#303010;transform:scaleX(.77);transform-origin:0 0;">28</div>
<div class="mn" style="left:891.86px;top:535.45px;font-size:5.79px;color:#303010;transform:scaleX(.77);transform-origin:0 0;">31</div>
<div class="mn" style="left:918.76px;top:535.45px;font-size:5.79px;color:#303010;transform:scaleX(.77);transform-origin:0 0;">34</div>
<div class="mn" style="left:945.66px;top:535.45px;font-size:5.79px;color:#303010;transform:scaleX(.77);transform-origin:0 0;">38</div>
<div class="mn" style="left:972.56px;top:535.45px;font-size:5.79px;color:#303010;transform:scaleX(.77);transform-origin:0 0;">41</div>
<div class="mn" style="left:999.46px;top:535.45px;font-size:5.79px;color:#303010;transform:scaleX(.77);transform-origin:0 0;">44</div>
<div class="mn" style="left:1026.36px;top:535.45px;font-size:5.79px;color:#303010;transform:scaleX(.77);transform-origin:0 0;">47</div>
<div class="abs" style="left:598.80px;top:553.20px;width:495.00px;height:0.90px;background:#8c8c8c"></div>
<div class="abs" style="left:598.80px;top:554.10px;width:495.00px;height:0.90px;background:#f4f4f4"></div>
<div class="abs" style="left:598.80px;top:572.00px;width:495.00px;height:0.90px;background:#8c8c8c"></div>
<div class="abs" style="left:598.80px;top:572.90px;width:495.00px;height:0.90px;background:#f4f4f4"></div>
<div class="abs" style="left:598.00px;top:590.60px;width:58.00px;height:1.00px;background:#6e6e6e"></div>
<div class="abs" style="left:656.00px;top:590.60px;width:438.00px;height:1.00px;background:#a4a4a4"></div>
<div class="abs" style="left:1087.00px;top:590.40px;width:7.60px;height:1.40px;background:#8a8a8a"></div>
<div class="abs" style="left:605.80px;top:557.50px;width:13.40px;height:10.20px;box-sizing:border-box;background:#dcdcdc;border:.9px solid #f8f8f8;border-right-color:#6a6a6a;border-bottom-color:#6a6a6a;"><span class="mn ul" style="left:50%;top:0.60px;font-size:5.8px;color:#20207c;transform:translateX(-50%) scaleX(.77);">Zoom</span></div>
<div class="abs" style="left:623.80px;top:557.50px;width:13.50px;height:10.20px;box-sizing:border-box;background:#dcdcdc;border:.9px solid #f8f8f8;border-right-color:#6a6a6a;border-bottom-color:#6a6a6a;"><span class="mn ul" style="left:50%;top:0.60px;font-size:5.8px;color:#20207c;transform:translateX(-50%) scaleX(.77);">Make</span></div>
<div class="abs" style="left:642.00px;top:557.50px;width:48.80px;height:10.20px;box-sizing:border-box;background:#dcdcdc;border:.9px solid #f8f8f8;border-right-color:#6a6a6a;border-bottom-color:#6a6a6a;"><span class="mn ul" style="left:50%;top:0.60px;font-size:5.8px;color:#20207c;transform:translateX(-50%) scaleX(.77);">Elevation colours</span></div>
<div class="abs" style="left:695.30px;top:557.50px;width:19.20px;height:10.20px;box-sizing:border-box;background:#dcdcdc;border:.9px solid #f8f8f8;border-right-color:#6a6a6a;border-bottom-color:#6a6a6a;"><span class="mn ul" style="left:50%;top:0.60px;font-size:5.8px;color:#20207c;transform:translateX(-50%) scaleX(.77);">Labels</span></div>
<div class="abs" style="left:719.00px;top:557.50px;width:27.40px;height:10.20px;box-sizing:border-box;background:#dcdcdc;border:.9px solid #f8f8f8;border-right-color:#6a6a6a;border-bottom-color:#6a6a6a;"><span class="mn ul" style="left:50%;top:0.60px;font-size:5.8px;color:#20207c;transform:translateX(-50%) scaleX(.77);">Hitpoints</span></div>
<div class="abs" style="left:750.80px;top:557.50px;width:13.80px;height:10.20px;box-sizing:border-box;background:#dcdcdc;border:.9px solid #f8f8f8;border-right-color:#6a6a6a;border-bottom-color:#6a6a6a;"><span class="mn ul" style="left:50%;top:0.60px;font-size:5.8px;color:#20207c;transform:translateX(-50%) scaleX(.77);">Info</span></div>
<div class="abs" style="left:605.60px;top:576.10px;width:27.30px;height:10.40px;box-sizing:border-box;background:#dcdcdc;border:.9px solid #f8f8f8;border-right-color:#6a6a6a;border-bottom-color:#6a6a6a;"><span class="mn" style="left:50%;top:0.70px;font-size:5.8px;color:#20207c;transform:translateX(-50%) scaleX(.77);">Clear all</span></div>
<div class="abs" style="left:637.40px;top:576.10px;width:13.50px;height:10.40px;box-sizing:border-box;background:#dcdcdc;border:.9px solid #f8f8f8;border-right-color:#6a6a6a;border-bottom-color:#6a6a6a;"><span class="mn" style="left:50%;top:0.70px;font-size:5.8px;color:#20207c;transform:translateX(-50%) scaleX(.77);">Pegs</span></div>
<div class="abs" style="left:654.80px;top:576.10px;width:28.10px;height:10.40px;box-sizing:border-box;background:#b2b2b2;border:.9px solid #777;border-right-color:#f0f0f0;border-bottom-color:#f0f0f0;"><span class="mn" style="left:50%;top:0.70px;font-size:5.8px;color:#20207c;transform:translateX(-50%) scaleX(.77);">Receivers</span></div>
<div class="abs" style="left:686.60px;top:576.10px;width:17.20px;height:10.40px;box-sizing:border-box;background:#b2b2b2;border:.9px solid #777;border-right-color:#f0f0f0;border-bottom-color:#f0f0f0;"><span class="mn" style="left:50%;top:0.70px;font-size:5.8px;color:#20207c;transform:translateX(-50%) scaleX(.77);">Shots</span></div>
<div class="abs" style="left:708.00px;top:576.10px;width:27.90px;height:10.40px;box-sizing:border-box;background:#dcdcdc;border:.9px solid #f8f8f8;border-right-color:#6a6a6a;border-bottom-color:#6a6a6a;"><span class="mn" style="left:50%;top:0.70px;font-size:5.8px;color:#20207c;transform:translateX(-50%) scaleX(.77);">Midpoints</span></div>
<div class="abs" style="left:739.80px;top:576.10px;width:24.70px;height:10.40px;box-sizing:border-box;background:#dcdcdc;border:.9px solid #f8f8f8;border-right-color:#6a6a6a;border-bottom-color:#6a6a6a;"><span class="mn" style="left:50%;top:0.70px;font-size:5.8px;color:#20207c;transform:translateX(-50%) scaleX(.77);">Azimuths</span></div>
<div class="abs" style="left:768.90px;top:576.10px;width:32.50px;height:10.40px;box-sizing:border-box;background:#dcdcdc;border:.9px solid #f8f8f8;border-right-color:#6a6a6a;border-bottom-color:#6a6a6a;"><span class="mn" style="left:50%;top:0.70px;font-size:5.8px;color:#20207c;transform:translateX(-50%) scaleX(.77);">Lost traces</span></div>
<div class="abs" style="left:805.00px;top:576.10px;width:28.30px;height:10.40px;box-sizing:border-box;background:#b2b2b2;border:.9px solid #777;border-right-color:#f0f0f0;border-bottom-color:#f0f0f0;"><span class="mn" style="left:50%;top:0.70px;font-size:5.8px;color:#20207c;transform:translateX(-50%) scaleX(.77);">Hitpoints</span></div>
<div class="abs" style="left:837.70px;top:576.10px;width:14.00px;height:10.40px;box-sizing:border-box;background:#dcdcdc;border:.9px solid #f8f8f8;border-right-color:#6a6a6a;border-bottom-color:#6a6a6a;"><span class="mn" style="left:50%;top:0.70px;font-size:5.8px;color:#20207c;transform:translateX(-50%) scaleX(.77);">CDPs</span></div>
<div class="abs" style="left:855.60px;top:576.10px;width:25.40px;height:10.40px;box-sizing:border-box;background:#dcdcdc;border:.9px solid #f8f8f8;border-right-color:#6a6a6a;border-bottom-color:#6a6a6a;"><span class="mn" style="left:50%;top:0.70px;font-size:5.8px;color:#20207c;transform:translateX(-50%) scaleX(.77);">CDP bins</span></div>
<div class="abs" style="left:884.30px;top:576.10px;width:25.60px;height:10.40px;box-sizing:border-box;background:#b2b2b2;border:.9px solid #777;border-right-color:#f0f0f0;border-bottom-color:#f0f0f0;"><span class="mn" style="left:50%;top:0.70px;font-size:5.8px;color:#20207c;transform:translateX(-50%) scaleX(.77);">CDP fold</span></div>
<div class="abs" style="left:913.80px;top:576.10px;width:22.40px;height:10.40px;box-sizing:border-box;background:#dcdcdc;border:.9px solid #f8f8f8;border-right-color:#6a6a6a;border-bottom-color:#6a6a6a;"><span class="mn" style="left:50%;top:0.70px;font-size:5.8px;color:#20207c;transform:translateX(-50%) scaleX(.77);">3D grid</span></div>
<div class="abs" style="left:940.20px;top:576.10px;width:30.70px;height:10.40px;box-sizing:border-box;background:#dcdcdc;border:.9px solid #f8f8f8;border-right-color:#6a6a6a;border-bottom-color:#6a6a6a;"><span class="mn" style="left:50%;top:0.70px;font-size:5.8px;color:#8c8c8c;transform:translateX(-50%) scaleX(.77);">Polyselect</span></div>
<div class="abs" style="left:660.00px;top:592.70px;width:172.00px;height:1.10px;background:repeating-linear-gradient(90deg,rgba(240,130,80,.3) 0 3px,rgba(255,255,255,0) 3px 4.2px)"></div>
<div class="abs" style="left:1014.00px;top:592.70px;width:74.00px;height:1.10px;background:repeating-linear-gradient(90deg,rgba(240,130,80,.3) 0 3px,rgba(255,255,255,0) 3px 4.2px)"></div>
</body></html>
